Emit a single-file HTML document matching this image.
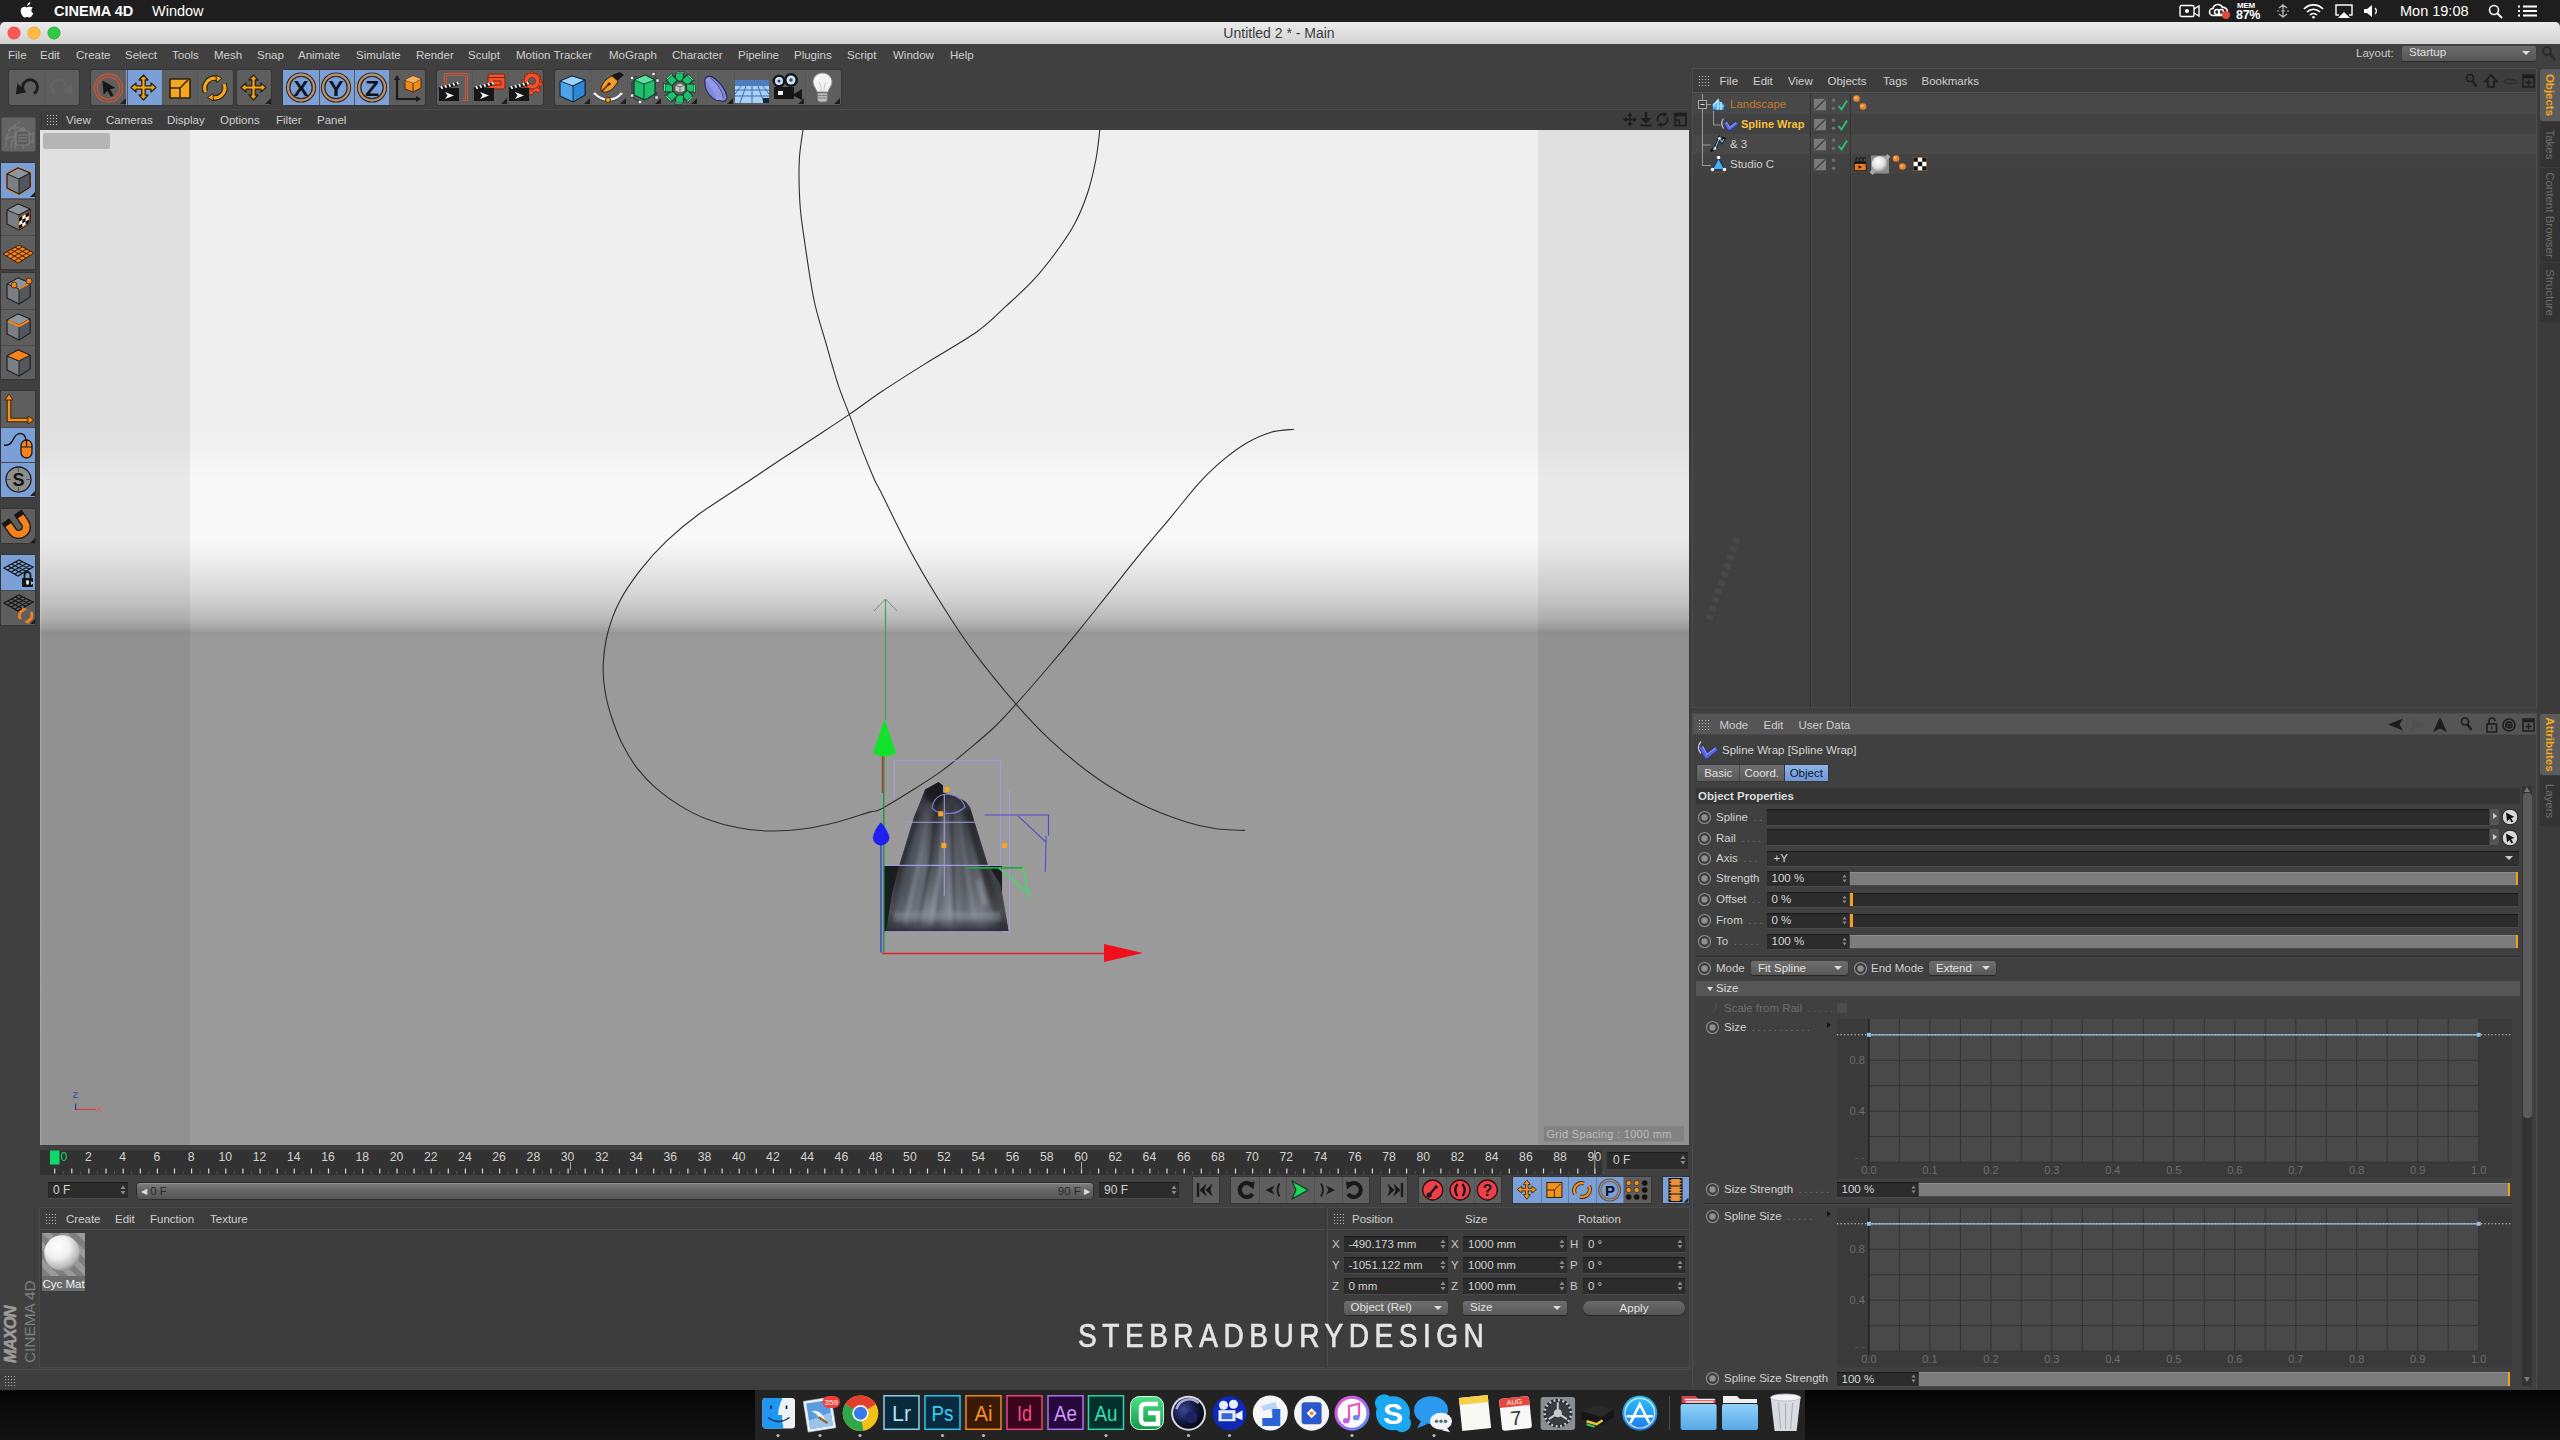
<!DOCTYPE html>
<html><head><meta charset="utf-8"><title>Cinema 4D</title>
<style>
*{box-sizing:border-box;margin:0;padding:0}
html,body{width:2560px;height:1440px;overflow:hidden;background:#404040;font-family:"Liberation Sans",sans-serif;}
.abs{position:absolute}
#macbar{position:absolute;left:0;top:0;width:2560px;height:22px;background:#1e1e1e;color:#fff;font-size:14.5px;}
#macbar span{position:absolute;top:2px;white-space:nowrap}
#titlebar{position:absolute;left:0;top:22px;width:2560px;height:22px;background:linear-gradient(#ececec,#d2d2d2);border-radius:5px 5px 0 0;}
#titlebar .t{position:absolute;left:0;width:2558px;text-align:center;top:3px;font-size:14px;color:#3c3c3c}
.tl{position:absolute;top:5px;width:12px;height:12px;border-radius:6px}
#menubar{position:absolute;left:0;top:44px;width:2560px;height:24px;background:#404040;color:#cfcfcf;font-size:11.5px}
#menubar span,.pm span{position:absolute;top:5px;white-space:nowrap}
.pm{position:absolute;color:#cfcfcf;font-size:11.5px;}
.grp{position:absolute;top:70px;height:35px;background:#5e5e5e;border-radius:2px;box-shadow:0 0 0 1px #353535}
.act{position:absolute;top:0;height:35px;background:#7ba0d8}
.grip{position:absolute;width:11px;height:11px;background-image:radial-gradient(#bbb 0.8px,transparent 1px);background-size:3px 3px;}
#root{position:absolute;left:0;top:0;width:2560px;height:1440px;}
</style></head><body><div id="root">
<div id="macbar">
<svg class="abs" style="left:20px;top:2px" width="15" height="17" viewBox="0 0 15 17"><path fill="#fff" d="M10.3 0.2c0.1 0.9 -0.3 1.8 -0.8 2.4c-0.6 0.7 -1.4 1.2 -2.3 1.1c-0.1 -0.9 0.3 -1.7 0.8 -2.3c0.6 -0.7 1.5 -1.1 2.3 -1.2zM12.9 5.8c-0.9 0.6 -1.5 1.4 -1.5 2.6c0 1.4 0.8 2.3 1.9 2.8c-0.3 0.9 -0.7 1.7 -1.2 2.4c-0.7 1 -1.4 1.9 -2.4 1.9c-1 0 -1.3 -0.6 -2.5 -0.6c-1.2 0 -1.5 0.6 -2.5 0.6c-1 0 -1.7 -0.9 -2.4 -1.9c-1.4 -2 -2.3 -4.8 -1 -7c0.7 -1.1 1.8 -1.8 3 -1.8c1 0 1.9 0.7 2.5 0.7c0.6 0 1.7 -0.8 2.9 -0.7c1 0 2.3 0.4 3.2 1z"/></svg>
<span style="left:54px;font-weight:bold;font-size:14.5px;top:3px">CINEMA 4D</span>
<span style="left:152px;top:3px">Window</span>
<!-- right status icons -->
<svg class="abs" style="left:2176px;top:0" width="370" height="22" viewBox="2176 0 370 22" fill="none" stroke="#fff" stroke-width="1.4">
<rect x="2180" y="5.5" width="14" height="11" rx="1.5"/><path d="M2194 9l5-3v10l-5-3"/><circle cx="2187" cy="11" r="2" fill="#fff" stroke="none"/>
<path d="M2213 15.5a3.5 3.5 0 0 1 0-7a5 5 0 0 1 9.5-1a4 4 0 0 1 1.5 8z" stroke-width="1.6"/><circle cx="2217" cy="12" r="2.5"/><circle cx="2221" cy="12" r="2.5"/>
<circle cx="2226" cy="15" r="4" fill="#e8483c" stroke="none"/>
<path d="M2283 4v14M2279 8l4-3l4 3M2279 14l4 3l4-3M2277 11h2M2281 11h4M2287 11h2" stroke-width="1.2" stroke="#bbb"/>
<path d="M2304 9a13 13 0 0 1 19 0M2307 12a9 9 0 0 1 13 0M2310 15a5 5 0 0 1 7 0" stroke-width="1.7"/><circle cx="2313.5" cy="17.3" r="1.3" fill="#fff" stroke="none"/>
<path d="M2339 15h-3v-10h16v10h-3"/><path d="M2344 12l6 6h-12z" fill="#fff" stroke="none"/>
<path d="M2364 9h3l5-4v12l-5-4h-3z" fill="#fff" stroke="none"/><path d="M2375 8a4 4 0 0 1 0 6" stroke-width="1.3"/>
<circle cx="2494" cy="10" r="4.5" stroke-width="1.6"/><path d="M2497.5 13.5l4.5 4.5" stroke-width="1.8"/>
<path d="M2523 6.5h14M2523 11h14M2523 15.5h14" stroke-width="2"/><path d="M2518 6.5h2M2518 11h2M2518 15.5h2" stroke-width="2"/>
</svg>
<span style="left:2237px;top:1px;font-size:8px;font-weight:bold;letter-spacing:-0.2px">MEM</span>
<span style="left:2236px;top:8px;font-size:12.5px;font-weight:bold;letter-spacing:-0.3px">87%</span>
<span style="left:2400px;top:3px;font-size:14.5px">Mon 19:08</span>
</div>

<div id="titlebar">
<div class="tl" style="left:8px;background:#fc5753;box-shadow:0 0 0 0.5px #df4744"></div>
<div class="tl" style="left:28px;background:#fdbc40;box-shadow:0 0 0 0.5px #de9f34"></div>
<div class="tl" style="left:48px;background:#33c748;box-shadow:0 0 0 0.5px #27aa35"></div>
<div class="t">Untitled 2 * - Main</div>
</div>

<div id="menubar"><span style="left:8px">File</span><span style="left:40px">Edit</span><span style="left:76px">Create</span><span style="left:125px">Select</span><span style="left:172px">Tools</span><span style="left:214px">Mesh</span><span style="left:257px">Snap</span><span style="left:298px">Animate</span><span style="left:356px">Simulate</span><span style="left:416px">Render</span><span style="left:468px">Sculpt</span><span style="left:516px">Motion Tracker</span><span style="left:609px">MoGraph</span><span style="left:672px">Character</span><span style="left:738px">Pipeline</span><span style="left:794px">Plugins</span><span style="left:847px">Script</span><span style="left:893px">Window</span><span style="left:950px">Help</span><span style="left:2356px;top:3px;font-size:11.5px;color:#c8c8c8">Layout:</span><div class="abs" style="left:2402px;top:2px;width:134px;height:15px;background:linear-gradient(#6b6b6b,#565656);border-radius:2px;box-shadow:0 1px 1px #2a2a2a"><span style="left:7px;top:0px;font-size:11.5px;color:#e0e0e0">Startup</span><div class="abs" style="right:6px;top:5px;border:4px solid transparent;border-top:4px solid #ddd;border-bottom:0"></div></div><svg class="abs" style="left:2541px;top:1px" width="16" height="18" viewBox="0 0 16 18"><circle cx="6" cy="6" r="4" fill="none" stroke="#2a2a2a" stroke-width="2"/><path d="M9 9l5 6" stroke="#2a2a2a" stroke-width="2.500"/></svg></div>
<div class="grp" style="left:9px;width:70px"><div class="abs" style="left:35px;top:0;width:1px;height:35px;background:#575757"></div><svg class="abs" style="left:-0.5px;top:0px" width="36" height="35" viewBox="0 0 36 35"><path d="M14.5 20.5A7.4 7.4 0 1 1 24.8 23.6" fill="none" stroke="#1c1c1c" stroke-width="2.8"/><path d="M6.8 24.6L8.5 13.2L17.5 22.3Z" fill="#1c1c1c"/></svg><svg class="abs" style="left:34.5px;top:0px" width="36" height="35" viewBox="0 0 36 35"><path d="M21.5 20.5A7.4 7.4 0 1 0 11.2 23.6" fill="none" stroke="#646464" stroke-width="2.8"/><path d="M29.2 24.6L27.5 13.2L18.5 22.3Z" fill="#646464"/></svg></div><div class="grp" style="left:91px;width:142px"><div class="act" style="left:35px;width:36px"></div><div class="abs" style="left:36px;top:0;width:1px;height:35px;background:#575757"></div><div class="abs" style="left:71px;top:0;width:1px;height:35px;background:#575757"></div><div class="abs" style="left:106px;top:0;width:1px;height:35px;background:#575757"></div><svg class="abs" style="left:-0.25px;top:0px" width="36" height="35" viewBox="0 0 36 35"><circle cx="17.5" cy="18" r="14" fill="none" stroke="#c8553a" stroke-width="1.3"/><circle cx="17.5" cy="18" r="11.2" fill="none" stroke="#c8553a" stroke-width="1.3"/><path d="M11.5 10.5l13 7.5l-5.5 1.2l3.5 6l-2.6 1.5l-3.5-6l-3.7 4z" fill="#161616"/><path d="M35 34h-6l6-6z" fill="#1e1e1e"/></svg><svg class="abs" style="left:35.25px;top:0px" width="36" height="35" viewBox="0 0 36 35"><path d="M17.5 5l4.5 5h-2.8v5.8h5.8v-2.8l5 4.5l-5 4.5v-2.8h-5.8v5.8h2.8l-4.5 5l-4.5-5h2.8v-5.8h-5.8v2.8l-5-4.5l5-4.5v2.8h5.8v-5.8h-2.8z" fill="#f6a51c" stroke="#2a2410" stroke-width="1.3" stroke-linejoin="round"/></svg><svg class="abs" style="left:70.75px;top:0px" width="36" height="35" viewBox="0 0 36 35"><path d="M8 9h20v19h-20z" fill="#f6a51c" stroke="#2a2410" stroke-width="1.6" stroke-linejoin="round"/><path d="M8 18h10v10M18 18l8-8" fill="none" stroke="#2a2410" stroke-width="1.5"/></svg><svg class="abs" style="left:106.25px;top:0px" width="36" height="35" viewBox="0 0 36 35"><path d="M8.5 22a10 10 0 0 1 12-13.5" fill="none" stroke="#2a2410" stroke-width="5.5"/><path d="M8.5 22a10 10 0 0 1 12-13.5" fill="none" stroke="#f6a51c" stroke-width="3.2"/><path d="M27 14a10 10 0 0 1-12 13.5" fill="none" stroke="#2a2410" stroke-width="5.5"/><path d="M27 14a10 10 0 0 1-12 13.5" fill="none" stroke="#f6a51c" stroke-width="3.2"/><path d="M19 5l6 3.5l-5.5 4z" fill="#f6a51c" stroke="#2a2410" stroke-width="1"/><path d="M16.5 31l-6-3.5l5.5-4z" fill="#f6a51c" stroke="#2a2410" stroke-width="1"/></svg></div><div class="grp" style="left:237px;width:34px"><svg class="abs" style="left:-1px;top:0px" width="36" height="35" viewBox="0 0 36 35"><path d="M17.5 5l4.5 5h-2.8v5.8h5.8v-2.8l5 4.5l-5 4.5v-2.8h-5.8v5.8h2.8l-4.5 5l-4.5-5h2.8v-5.8h-5.8v2.8l-5-4.5l5-4.5v2.8h5.8v-5.8h-2.8z" fill="#f6a51c" stroke="#2a2410" stroke-width="1.3" stroke-linejoin="round"/><path d="M35 34h-6l6-6z" fill="#1e1e1e"/></svg></div><div class="grp" style="left:283px;width:142px"><div class="act" style="left:0px;width:36px"></div><div class="act" style="left:36px;width:36px"></div><div class="act" style="left:71px;width:36px"></div><div class="abs" style="left:36px;top:0;width:1px;height:35px;background:#575757"></div><div class="abs" style="left:71px;top:0;width:1px;height:35px;background:#575757"></div><div class="abs" style="left:106px;top:0;width:1px;height:35px;background:#575757"></div><svg class="abs" style="left:-0.25px;top:0px" width="36" height="35" viewBox="0 0 36 35"><circle cx="18" cy="17.5" r="14.5" fill="none" stroke="#3a2a1a" stroke-width="1.2"/><circle cx="18" cy="17.5" r="13.2" fill="none" stroke="#d98a3a" stroke-width="1.3"/><circle cx="18" cy="17.5" r="11.2" fill="none" stroke="#3a2a1a" stroke-width="1.3"/><text x="18" y="25.6" font-family="Liberation Sans" font-weight="bold" font-size="22.5" text-anchor="middle" fill="#0d1420">X</text></svg><svg class="abs" style="left:35.25px;top:0px" width="36" height="35" viewBox="0 0 36 35"><circle cx="18" cy="17.5" r="14.5" fill="none" stroke="#3a2a1a" stroke-width="1.2"/><circle cx="18" cy="17.5" r="13.2" fill="none" stroke="#d98a3a" stroke-width="1.3"/><circle cx="18" cy="17.5" r="11.2" fill="none" stroke="#3a2a1a" stroke-width="1.3"/><text x="18" y="25.6" font-family="Liberation Sans" font-weight="bold" font-size="22.5" text-anchor="middle" fill="#0d1420">Y</text></svg><svg class="abs" style="left:70.75px;top:0px" width="36" height="35" viewBox="0 0 36 35"><circle cx="18" cy="17.5" r="14.5" fill="none" stroke="#3a2a1a" stroke-width="1.2"/><circle cx="18" cy="17.5" r="13.2" fill="none" stroke="#d98a3a" stroke-width="1.3"/><circle cx="18" cy="17.5" r="11.2" fill="none" stroke="#3a2a1a" stroke-width="1.3"/><text x="18" y="25.6" font-family="Liberation Sans" font-weight="bold" font-size="22.5" text-anchor="middle" fill="#0d1420">Z</text></svg><svg class="abs" style="left:106.25px;top:0px" width="36" height="35" viewBox="0 0 36 35"><path d="M8 8v21h21" fill="none" stroke="#1a1a1a" stroke-width="2.2"/><path d="M8 5l-3 5h6zM32 29l-5-3v6z" fill="#1a1a1a"/><path d="M16 10l8-4l8 3v9l-8 4l-8-3z" fill="#f08a1c" stroke="#4a2a08" stroke-width="1"/><path d="M16 10l8 3l8-4M24 13v9" fill="none" stroke="#4a2a08" stroke-width="1"/><path d="M16 10l8-4l8 3l-8 4z" fill="#f7b060"/></svg></div><div class="grp" style="left:437px;width:106px"><div class="abs" style="left:35px;top:0;width:1px;height:35px;background:#575757"></div><div class="abs" style="left:71px;top:0;width:1px;height:35px;background:#575757"></div><svg class="abs" style="left:-0.333333px;top:0px" width="36" height="35" viewBox="0 0 36 35"><path d="M7.5 3.5h23v27h-5M7.5 3.5v12" fill="none" stroke="#c8553a" stroke-width="1.2"/><path d="M9.5 5.5h19v23h-3M9.5 5.5v10" fill="none" stroke="#c8553a" stroke-width="1"/><g transform="translate(-3,-1)"><path d="M5 19h20v13h-20z" fill="#161616"/><path d="M4.5 18.5l20-5.5l0.8 3l-20 5.5z" fill="#161616"/><path d="M7 17.3l1.5 2.6M11 16.2l1.5 2.6M15 15.1l1.5 2.6M19 14l1.5 2.6M23 13l1.5 2.5" stroke="#eee" stroke-width="1.8"/><path d="M11 23l9 3.5l-9 3.5l2.5-3.5z" fill="#f2f2f2"/></g></svg><svg class="abs" style="left:35px;top:0px" width="36" height="35" viewBox="0 0 36 35"><path d="M18 4h13a2 2 0 0 1 2 2v11a2 2 0 0 1-2 2h-13a2 2 0 0 1-2-2v-11a2 2 0 0 1 2-2z" fill="#f0522c" stroke="#7a2410" stroke-width="1"/><path d="M16 7.5h17" stroke="#7a2410" stroke-width="1"/><path d="M21 11h8v4h-8z" fill="none" stroke="#7a2410" stroke-width="1"/><g transform="translate(-3,-1)"><path d="M5 19h20v13h-20z" fill="#161616"/><path d="M4.5 18.5l20-5.5l0.8 3l-20 5.5z" fill="#161616"/><path d="M7 17.3l1.5 2.6M11 16.2l1.5 2.6M15 15.1l1.5 2.6M19 14l1.5 2.6M23 13l1.5 2.5" stroke="#eee" stroke-width="1.8"/><path d="M11 23l9 3.5l-9 3.5l2.5-3.5z" fill="#f2f2f2"/></g><path d="M35 34h-6l6-6z" fill="#1e1e1e"/></svg><svg class="abs" style="left:70.3333px;top:0px" width="36" height="35" viewBox="0 0 36 35"><g transform="translate(25,11)"><path d="M-1.8-9h3.6l0.6 2.3l2 1l2.2-1l2.4 2.6l-1.3 2l0.7 2.1l2.2 0.9v3.4l-2.3 0.7l-0.9 2l1.1 2.2l-2.5 2.5l-2.1-1.2l-2.1 0.8l-0.7 2.3h-3.6" fill="#f0522c" stroke="#7a2410" stroke-width="0.8"/><circle r="8" fill="#f0522c"/><circle r="8" fill="none" stroke="#7a2410" stroke-width="0.6"/><path d="M0-10.5l2 2.5h-4zM0 10.5l2-2.5h-4zM10.5 0l-2.5 2v-4zM-10.5 0l2.5 2v-4zM7.4-7.4l-0.4 3.2l-2.8-2.8zM-7.4-7.4l0.4 3.2l2.8-2.8zM7.4 7.4l-0.4-3.2l-2.8 2.8zM-7.4 7.4l0.4-3.2l2.8 2.8z" fill="#f0522c" stroke="#7a2410" stroke-width="0.7"/><circle r="3.5" fill="#5e5e5e" stroke="#7a2410" stroke-width="0.8"/></g><g transform="translate(-3,-1)"><path d="M5 19h20v13h-20z" fill="#161616"/><path d="M4.5 18.5l20-5.5l0.8 3l-20 5.5z" fill="#161616"/><path d="M7 17.3l1.5 2.6M11 16.2l1.5 2.6M15 15.1l1.5 2.6M19 14l1.5 2.6M23 13l1.5 2.5" stroke="#eee" stroke-width="1.8"/><path d="M11 23l9 3.5l-9 3.5l2.5-3.5z" fill="#f2f2f2"/></g></svg></div><div class="grp" style="left:555px;width:286px"><div class="abs" style="left:36px;top:0;width:1px;height:35px;background:#575757"></div><div class="abs" style="left:72px;top:0;width:1px;height:35px;background:#575757"></div><div class="abs" style="left:107px;top:0;width:1px;height:35px;background:#575757"></div><div class="abs" style="left:143px;top:0;width:1px;height:35px;background:#575757"></div><div class="abs" style="left:179px;top:0;width:1px;height:35px;background:#575757"></div><div class="abs" style="left:214px;top:0;width:1px;height:35px;background:#575757"></div><div class="abs" style="left:250px;top:0;width:1px;height:35px;background:#575757"></div><svg class="abs" style="left:-0.125px;top:0px" width="36" height="35" viewBox="0 0 36 35"><path d="M5 11l12-5l13 4v15l-12 7l-13-6z" fill="#4da3e8" stroke="#12283c" stroke-width="1.2" stroke-linejoin="round"/><path d="M5 11l13 5l12-6l-13-4z" fill="#9ad2f8" stroke="#12283c" stroke-width="1" stroke-linejoin="round"/><path d="M18 16v16l12-7v-15z" fill="#2f86d2" stroke="#12283c" stroke-width="1" stroke-linejoin="round"/><path d="M35 34h-6l6-6z" fill="#1e1e1e"/></svg><svg class="abs" style="left:35.625px;top:0px" width="36" height="35" viewBox="0 0 36 35"><path d="M21 5l8-3l4 3l-7 6z" fill="#161616"/><path d="M10 21c-1-5 4-12 11-15l6 5c-3 7-9 12-15 11z" fill="#f39a2a" stroke="#3a1e08" stroke-width="1"/><path d="M11 21l8-8" stroke="#3a1e08" stroke-width="1.2"/><circle cx="18" cy="14" r="1.5" fill="#3a1e08"/><path d="M3 23c8 9 21 9 28 0" fill="none" stroke="#f4f4f4" stroke-width="2.6"/><path d="M3 23c8 9 21 9 28 0" fill="none" stroke="#222" stroke-width="0.6" transform="translate(0,1.7)"/><circle cx="17" cy="30" r="2.6" fill="#f39a2a" stroke="#3a1e08" stroke-width="0.9"/><path d="M35 34h-6l6-6z" fill="#1e1e1e"/></svg><svg class="abs" style="left:71.375px;top:0px" width="36" height="35" viewBox="0 0 36 35"><path d="M8 10l11-5l10 5v14l-10 6l-11-5z" fill="#1fbf6c" stroke="#0a3a20" stroke-width="1.2" stroke-linejoin="round"/><path d="M8 10l10 4l11-4l-10-5z" fill="#5de0a0" stroke="#0a3a20" stroke-width="0.9"/><path d="M18 14v16" stroke="#0a3a20" stroke-width="0.9"/><path d="M6 8l5-2M27 4l4 5M31 22l-3 7M14 32l-7-4M6 25v-14" stroke="#222" stroke-width="0.8" fill="none"/><g fill="#f4f4f4" stroke="#333" stroke-width="0.5"><rect x="4.5" y="6.5" width="3" height="3"/><rect x="26" y="2.5" width="3" height="3"/><rect x="30" y="9" width="3" height="3"/><rect x="29" y="26" width="3" height="3"/><rect x="12.5" y="30.5" width="3" height="3"/><rect x="4.5" y="24" width="3" height="3"/></g><path d="M35 34h-6l6-6z" fill="#1e1e1e"/></svg><svg class="abs" style="left:107.125px;top:0px" width="36" height="35" viewBox="0 0 36 35"><g transform="rotate(0 17.5 18)"><path d="M13.5 3.5h8v7.5h-8z" fill="#1fbf6c" stroke="#0a3a20" stroke-width="1"/><path d="M13.5 3.5l1.5-1.5h8l-1.5 1.5" fill="#5de0a0" stroke="#0a3a20" stroke-width="0.7"/></g><g transform="rotate(45 17.5 18)"><path d="M13.5 3.5h8v7.5h-8z" fill="#1fbf6c" stroke="#0a3a20" stroke-width="1"/><path d="M13.5 3.5l1.5-1.5h8l-1.5 1.5" fill="#5de0a0" stroke="#0a3a20" stroke-width="0.7"/></g><g transform="rotate(90 17.5 18)"><path d="M13.5 3.5h8v7.5h-8z" fill="#1fbf6c" stroke="#0a3a20" stroke-width="1"/><path d="M13.5 3.5l1.5-1.5h8l-1.5 1.5" fill="#5de0a0" stroke="#0a3a20" stroke-width="0.7"/></g><g transform="rotate(135 17.5 18)"><path d="M13.5 3.5h8v7.5h-8z" fill="#1fbf6c" stroke="#0a3a20" stroke-width="1"/><path d="M13.5 3.5l1.5-1.5h8l-1.5 1.5" fill="#5de0a0" stroke="#0a3a20" stroke-width="0.7"/></g><g transform="rotate(180 17.5 18)"><path d="M13.5 3.5h8v7.5h-8z" fill="#1fbf6c" stroke="#0a3a20" stroke-width="1"/><path d="M13.5 3.5l1.5-1.5h8l-1.5 1.5" fill="#5de0a0" stroke="#0a3a20" stroke-width="0.7"/></g><g transform="rotate(225 17.5 18)"><path d="M13.5 3.5h8v7.5h-8z" fill="#1fbf6c" stroke="#0a3a20" stroke-width="1"/><path d="M13.5 3.5l1.5-1.5h8l-1.5 1.5" fill="#5de0a0" stroke="#0a3a20" stroke-width="0.7"/></g><g transform="rotate(270 17.5 18)"><path d="M13.5 3.5h8v7.5h-8z" fill="#1fbf6c" stroke="#0a3a20" stroke-width="1"/><path d="M13.5 3.5l1.5-1.5h8l-1.5 1.5" fill="#5de0a0" stroke="#0a3a20" stroke-width="0.7"/></g><g transform="rotate(315 17.5 18)"><path d="M13.5 3.5h8v7.5h-8z" fill="#1fbf6c" stroke="#0a3a20" stroke-width="1"/><path d="M13.5 3.5l1.5-1.5h8l-1.5 1.5" fill="#5de0a0" stroke="#0a3a20" stroke-width="0.7"/></g><path d="M13 15l5-2l5 2v6l-5 2l-5-2z" fill="#c8c8c8" stroke="#444" stroke-width="0.8"/><path d="M13 15l5 2l5-2M18 17v6" fill="none" stroke="#444" stroke-width="0.7"/><path d="M35 34h-6l6-6z" fill="#1e1e1e"/></svg><svg class="abs" style="left:142.875px;top:0px" width="36" height="35" viewBox="0 0 36 35"><path d="M7 10c0-4 5-5 9-2c6 4 12 12 13 19c0 3-2 5-6 4l-5-1c-5-2-10-8-11-14z" fill="#7f86dc" stroke="#23264e" stroke-width="1.1"/><path d="M12 8c6 4 12 12 13 20" fill="none" stroke="#23264e" stroke-width="0.9"/><path d="M7 10c2-2 4-2 5-2c6 4 12 12 13 20c-1 2-3 2-7 2c-1-7-6-15-11-20z" fill="#9aa0ea" opacity="0.7"/><path d="M35 34h-6l6-6z" fill="#1e1e1e"/></svg><svg class="abs" style="left:178.625px;top:0px" width="36" height="35" viewBox="0 0 36 35"><path d="M1 10h34v6h-34z" fill="#4d7dbe"/><path d="M1 16h34v17h-34z" fill="#a9d0f5"/><path d="M1 20h34M1 26h34M18 16v17M12 16l-6 17M24 16l6 17M7 16l-6 8M29 16l6 8" stroke="#3d6cae" stroke-width="1" fill="none"/><path d="M35 33h-6v-5h6z" fill="#12283c"/></svg><svg class="abs" style="left:214.375px;top:0px" width="36" height="35" viewBox="0 0 36 35"><circle cx="10" cy="11" r="6.5" fill="#161616"/><circle cx="22" cy="10" r="7" fill="#161616"/><circle cx="10" cy="11" r="4" fill="#cfe4f8"/><circle cx="22" cy="10" r="4.5" fill="#cfe4f8"/><circle cx="10" cy="11" r="1.6" fill="#2a4a7a"/><circle cx="22" cy="10" r="1.8" fill="#2a4a7a"/><path d="M5 17h20v12h-20z" fill="#161616"/><path d="M25 24l8-5v11l-8-4z" fill="#161616"/><rect x="9" y="21" width="5" height="4" fill="#f0f0f0"/><path d="M35 34h-6l6-6z" fill="#1e1e1e"/></svg><svg class="abs" style="left:250.125px;top:0px" width="36" height="35" viewBox="0 0 36 35"><path d="M17.5 3c6 0 9.5 4.5 9.5 9c0 4-3 6-4 10h-11c-1-4-4-6-4-10c0-4.5 3.5-9 9.5-9z" fill="#f2f2f2" stroke="#8a8a8a" stroke-width="1"/><path d="M14 7c-2 1-3 3-3 5" stroke="#fff" stroke-width="2" fill="none"/><path d="M12.5 23h10v7l-2 2h-6l-2-2z" fill="#bdbdbd" stroke="#777" stroke-width="0.8"/><path d="M12.5 25.5h10M12.5 28h10" stroke="#777" stroke-width="0.9"/><path d="M14 12c2 3 2 7 2 10M21 12c-2 3-2 7-2 10" stroke="#bbb" stroke-width="0.8" fill="none"/><path d="M35 34h-6l6-6z" fill="#1e1e1e"/></svg></div>
<div class="abs" style="left:1px;top:163px;width:34px;height:106px;background:#5e5e5e;box-shadow:0 0 0 1px #353535"></div><div class="abs" style="left:1px;top:273px;width:34px;height:106px;background:#5e5e5e;box-shadow:0 0 0 1px #353535"></div><div class="abs" style="left:1px;top:391px;width:34px;height:106px;background:#5e5e5e;box-shadow:0 0 0 1px #353535"></div><div class="abs" style="left:1px;top:509px;width:34px;height:34px;background:#5e5e5e;box-shadow:0 0 0 1px #353535"></div><div class="abs" style="left:1px;top:555px;width:34px;height:70px;background:#5e5e5e;box-shadow:0 0 0 1px #353535"></div><svg class="abs" style="left:1px;top:117px" width="35" height="35" viewBox="0 0 35 35"><rect x="0.5" y="0.5" width="34" height="34" rx="2" fill="#646464"/><path d="M5 30c0-13 5-22 14-25M10 31c1-11 6-18 14-20M4 22c6-3 14-3 20 0M7 13c5-3 12-3 18 0M14 8v24M22 10v22" stroke="#787878" stroke-width="1.3" fill="none"/><rect x="15" y="14" width="13" height="14" rx="2" fill="#5c5c5c" stroke="#7e7e7e" stroke-width="1.2"/><path d="M28 18l4-2v10l-4-2M17 18h9M17 21h9M17 24h9" stroke="#7e7e7e" stroke-width="1" fill="none"/></svg><div class="abs" style="left:1px;top:163px;width:34px;height:35px;background:#7ba0d8"></div><svg class="abs" style="left:1px;top:163px" width="35" height="35" viewBox="0 0 35 35"><path d="M6 11l11-6l12 5v14l-11 7l-12-6z" fill="#7a7a7a" stroke="#e8791c" stroke-width="2.6" stroke-linejoin="round"/><path d="M6 11l11-6l12 5v14l-11 7l-12-6z" fill="#7a7f86" stroke="#222" stroke-width="1.2" stroke-linejoin="round"/><path d="M6 11l12 5l11-6l-12-5z" fill="#8f959c" stroke="#222" stroke-width="1"/><path d="M18 16v15l11-7v-14z" fill="#52575e" stroke="#222" stroke-width="1"/><path d="M34 34h-5l5-5z" fill="#1e1e1e"/></svg><div class="abs" style="left:1px;top:199px;width:34px;height:1px;background:#4c4c4c"></div><svg class="abs" style="left:1px;top:199px" width="35" height="35" viewBox="0 0 35 35"><path d="M6 11l11-6l12 5v14l-11 7l-12-6z" fill="#7a7f86" stroke="#222" stroke-width="1.2" stroke-linejoin="round"/><path d="M6 11l12 5l11-6l-12-5z" fill="#8f959c" stroke="#222" stroke-width="1"/><path d="M18 16v15l11-7v-14z" fill="#52575e" stroke="#222" stroke-width="1"/><g transform="matrix(1 -0.6 0 1 18 19)"><rect width="10" height="11" fill="#fff" stroke="#e8791c" stroke-width="1"/><path d="M0 0h3.3v3.7h-3.3zM6.6 0h3.4v3.7h-3.4zM3.3 3.7h3.3v3.7h-3.3zM0 7.4h3.3v3.6h-3.3zM6.6 7.4h3.4v3.6h-3.4z" fill="#111"/></g></svg><div class="abs" style="left:1px;top:235px;width:34px;height:1px;background:#4c4c4c"></div><svg class="abs" style="left:1px;top:235px" width="35" height="35" viewBox="0 0 35 35"><path d="M2 19l16-9l15 8l-16 10z" fill="#f6821c" stroke="#3a1e08" stroke-width="1"/><path d="M6 16.7l15.5 9M10 14.5l15.5 8.6M14 12.2l15.3 8.5M5.5 21l16-9.3M9.5 23.5l16-9.5M13.5 25.7l16-9.7" stroke="#3a1e08" stroke-width="1" fill="none"/></svg><svg class="abs" style="left:1px;top:273px" width="35" height="35" viewBox="0 0 35 35"><path d="M6 11l11-6l12 5v14l-11 7l-12-6z" fill="#7a7f86" stroke="#222" stroke-width="1.2" stroke-linejoin="round"/><path d="M6 11l12 5l11-6l-12-5z" fill="#8f959c" stroke="#222" stroke-width="1"/><path d="M18 16v15l11-7v-14z" fill="#52575e" stroke="#222" stroke-width="1"/><path d="M18 16l11-6" stroke="#f6821c" stroke-width="1.5"/><circle cx="13" cy="12" r="3" fill="#f6821c" stroke="#3a1e08" stroke-width="0.8"/><circle cx="28" cy="8" r="3" fill="#f6821c" stroke="#3a1e08" stroke-width="0.8"/></svg><div class="abs" style="left:1px;top:309px;width:34px;height:1px;background:#4c4c4c"></div><svg class="abs" style="left:1px;top:309px" width="35" height="35" viewBox="0 0 35 35"><path d="M6 11l11-6l12 5v14l-11 7l-12-6z" fill="#7a7f86" stroke="#222" stroke-width="1.2" stroke-linejoin="round"/><path d="M6 11l12 5l11-6l-12-5z" fill="#8f959c" stroke="#222" stroke-width="1"/><path d="M18 16v15l11-7v-14z" fill="#52575e" stroke="#222" stroke-width="1"/><path d="M7 12l11 5l10-5.5" stroke="#f6821c" stroke-width="2.2" fill="none"/></svg><div class="abs" style="left:1px;top:345px;width:34px;height:1px;background:#4c4c4c"></div><svg class="abs" style="left:1px;top:345px" width="35" height="35" viewBox="0 0 35 35"><path d="M6 11l11-6l12 5v14l-11 7l-12-6z" fill="#7a7f86" stroke="#222" stroke-width="1.2" stroke-linejoin="round"/><path d="M6 11l12 5l11-6l-12-5z" fill="#8f959c" stroke="#222" stroke-width="1"/><path d="M18 16v15l11-7v-14z" fill="#52575e" stroke="#222" stroke-width="1"/><path d="M6 11l12 5l11-6l-12-5z" fill="#f6821c" stroke="#222" stroke-width="1"/></svg><svg class="abs" style="left:1px;top:391px" width="35" height="35" viewBox="0 0 35 35"><path d="M8 8v21h21" fill="none" stroke="#3a1e08" stroke-width="4.5"/><path d="M8 8v21h21" fill="none" stroke="#f6921c" stroke-width="2.5"/><path d="M8 3l-4 6h8zM33 29l-6-4v8z" fill="#f6921c" stroke="#3a1e08" stroke-width="0.9"/></svg><div class="abs" style="left:1px;top:427px;width:34px;height:35px;background:#7ba0d8"></div><div class="abs" style="left:1px;top:427px;width:34px;height:1px;background:#4c4c4c"></div><svg class="abs" style="left:1px;top:427px" width="35" height="35" viewBox="0 0 35 35"><path d="M3 18c6 1 8-3 10-7s6-6 10-3c2 2 2 4 2 6" fill="none" stroke="#161616" stroke-width="1.5"/><rect x="20" y="13" width="11" height="18" rx="5.5" fill="#f6821c" stroke="#161616" stroke-width="1.3"/><path d="M20 20h11M25.5 13v7" stroke="#161616" stroke-width="1.1"/></svg><div class="abs" style="left:1px;top:462px;width:34px;height:35px;background:#7ba0d8"></div><div class="abs" style="left:1px;top:462px;width:34px;height:1px;background:#4c4c4c"></div><svg class="abs" style="left:1px;top:462px" width="35" height="35" viewBox="0 0 35 35"><circle cx="17.5" cy="17.5" r="12.5" fill="#8e8e8e" stroke="#1c1c1c" stroke-width="1.3"/><path d="M17.5 5v5M17.5 25v5M5 17.5h5M25 17.5h5" stroke="#555" stroke-width="1"/><text x="17.5" y="24" font-family="Liberation Sans" font-weight="bold" font-size="18" text-anchor="middle" fill="#111">S</text><path d="M34 34h-5l5-5z" fill="#1e1e1e"/></svg><svg class="abs" style="left:1px;top:509px" width="35" height="35" viewBox="0 0 35 35"><g transform="rotate(-35 17.5 17.5)"><path d="M6 6h8v12a3.5 3.5 0 0 0 7 0v-12h8v12a11.5 11.5 0 0 1-23 0z" fill="#f6821c" stroke="#161616" stroke-width="1.3"/><path d="M6 6h8v4.5h-8zM21 6h8v4.5h-8z" fill="#161616"/></g><path d="M34 34h-5l5-5z" fill="#1e1e1e"/></svg><div class="abs" style="left:1px;top:555px;width:34px;height:35px;background:#7ba0d8"></div><svg class="abs" style="left:1px;top:555px" width="35" height="35" viewBox="0 0 35 35"><path d="M3 13l15-8l14 7l-15 9z" fill="none" stroke="#161616" stroke-width="1.3"/><path d="M6.8 11l14.5 7.5M10.5 9l14.3 7.3M14.3 7l14.2 7M6.5 15l15-8.2M10.3 17l15-8.4M13.8 19l15-8.5" stroke="#161616" stroke-width="1.2" fill="none"/><rect x="21" y="23" width="11" height="9" rx="1" fill="#161616"/><path d="M23.5 23v-3a3 3 0 0 1 6 0v3" fill="none" stroke="#161616" stroke-width="1.8"/><path d="M25 25.5h3l-0.5 4h-2z" fill="#fff"/><path d="M30 26l3 2l-3 2" fill="#9ac0ea"/></svg><div class="abs" style="left:1px;top:590px;width:34px;height:1px;background:#4c4c4c"></div><svg class="abs" style="left:1px;top:590px" width="35" height="35" viewBox="0 0 35 35"><path d="M3 13l15-8l14 7l-15 9z" fill="none" stroke="#161616" stroke-width="1.3"/><path d="M6.8 11l14.5 7.5M10.5 9l14.3 7.3M14.3 7l14.2 7M6.5 15l15-8.2M10.3 17l15-8.4M13.8 19l15-8.5" stroke="#161616" stroke-width="1.2" fill="none"/><path d="M19.5 29a6 6 0 0 1 3-9" fill="none" stroke="#f6821c" stroke-width="2.8"/><path d="M30 22a6 6 0 0 1-3 9" fill="none" stroke="#f6821c" stroke-width="2.8"/><path d="M21 17l5 2l-4 3zM28.5 34l-5-2l4-3z" fill="#f6821c"/><path d="M34 34h-5l5-5z" fill="#1e1e1e"/></svg>
<div class="abs" style="left:40px;top:108px;width:1651px;height:1038px;background:#3c3c3c"></div><div class="abs" style="left:40px;top:109px;width:1650px;height:21px;background:#3d3d3d;border-top:1px solid #4c4c4c"></div><div class="grip" style="left:46px;top:114px"></div><div class="pm" style="left:0;top:109px;height:21px;width:400px"><span style="left:66px">View</span><span style="left:106px">Cameras</span><span style="left:167px">Display</span><span style="left:220px">Options</span><span style="left:276px">Filter</span><span style="left:317px">Panel</span></div><svg class="abs" style="left:1620px;top:111px" width="70" height="18" viewBox="1620 111 70 18" fill="none" stroke="#1d1d1d" stroke-width="1.6"><path d="M1630 112.5l2.6 3.6h-5.2zM1630 126.5l2.6-3.6h-5.2zM1623 119.5l3.6-2.6v5.2zM1637 119.5l-3.6-2.6v5.2z" fill="#1d1d1d" stroke="none"/><path d="M1630 115v9M1625.5 119.5h9" stroke-width="1.3"/><path d="M1646 112v7" stroke-width="2.4"/><path d="M1640.5 118h11l-5.5 5.5z" fill="#1d1d1d" stroke="none"/><path d="M1640.5 125.5h11" stroke-width="1.8"/><path d="M1658 121.5a5 5 0 0 1 7-6.5M1667 117.5a5 5 0 0 1-7 6.5" stroke-width="1.7"/><path d="M1663.5 112l4 2.5l-4 2.5zM1661.5 127l-4-2.5l4-2.5z" fill="#1d1d1d" stroke="none"/><rect x="1675" y="113.5" width="11" height="12"/><path d="M1675 115h11" stroke-width="2.4"/><path d="M1675 120h4.5v5.5" stroke-width="1.3"/></svg><svg class="abs" style="left:40px;top:130px" width="1649" height="1015" viewBox="40 130 1649 1015"><defs><linearGradient id="vg" x1="0" y1="130" x2="0" y2="1145" gradientUnits="userSpaceOnUse"><stop offset="0" stop-color="#efefef"/><stop offset="0.2956" stop-color="#efefef"/><stop offset="0.3153" stop-color="#f2f2f2"/><stop offset="0.3429" stop-color="#f8f8f8"/><stop offset="0.4039" stop-color="#f8f8f8"/><stop offset="0.4118" stop-color="#f5f5f5"/><stop offset="0.4236" stop-color="#ededed"/><stop offset="0.4433" stop-color="#e0e0e0"/><stop offset="0.4611" stop-color="#d2d2d2"/><stop offset="0.4808" stop-color="#bababa"/><stop offset="0.4897" stop-color="#a8a8a8"/><stop offset="0.4956" stop-color="#979797"/><stop offset="0.5025" stop-color="#9a9a9a"/><stop offset="1" stop-color="#9b9b9b"/></linearGradient></defs><rect x="40" y="130" width="1649" height="1015" fill="url(#vg)"/><rect x="40" y="130" width="150" height="1015" fill="#000" opacity="0.06"/><rect x="1538" y="130" width="151" height="1015" fill="#000" opacity="0.06"/><rect x="40" y="130" width="1.5" height="1015" fill="#fff" opacity="0.18"/><rect x="43" y="133" width="67" height="16" rx="2" fill="#b5b5b5"/><path d="M803.3 128C802.6 133.3 799.9 147.5 799.3 160C798.7 172.5 799.1 189.8 799.9 203C800.7 216.2 801.9 223.2 804.3 239.4C806.6 255.6 810.4 282.6 814 300C817.6 317.4 822.2 329.7 826.2 343.9C830.2 358.1 834.4 373.4 838.3 385.2C842.1 396.9 845.2 403.4 849.3 414.4C853.3 425.3 858.4 440 862.6 450.9C866.8 461.8 871.7 473.4 874.6 480C877.5 486.6 874 478.4 880 490.3C886 502.2 900.4 532.6 910.6 551.4C920.8 570.2 930.9 587 941.1 603.3C951.3 619.6 959.2 632.4 971.7 649.2C984.2 666 1002.8 688.9 1016 704.2C1029.2 719.5 1038.1 728.8 1051.1 740.8C1064.1 752.8 1079.1 765.5 1093.9 776C1108.7 786.5 1124.4 795.9 1139.7 803.5C1155 811.1 1172.8 817.6 1185.5 821.8C1198.2 826 1206.2 827.4 1216.1 828.8C1226 830.2 1240.3 830.1 1245.1 830.4" fill="none" stroke="#2e2e2e" stroke-width="1.1"/><path d="M1100 128C1099.3 133.2 1098.1 148.1 1096 159C1093.9 169.9 1091.2 182.2 1087.5 193.2C1083.8 204.2 1079.6 214.7 1074.1 224.8C1068.6 234.9 1061.6 244.7 1054.7 254C1047.8 263.3 1040.9 272 1032.8 280.7C1024.7 289.4 1015.3 297.7 1006 306.2C996.7 314.7 990.3 322.3 976.9 331.8C963.5 341.3 941.6 353.5 925.8 363.4C910 373.3 894.9 382.8 882.1 391.3C869.4 399.8 860.2 406.9 849.3 414.4C838.4 421.9 828 428.7 816.5 436.3C805 443.9 791 452.7 780 460C769 467.3 763.8 470.9 750.2 480C736.7 489.1 712.6 504.2 698.7 514.3C684.8 524.4 676.7 531.5 667 540.7C657.3 549.9 648.6 559.6 640.7 569.7C632.8 579.8 625.1 590.9 619.6 601.4C614.1 611.9 610.4 622.5 607.7 633C605 643.5 603.7 655 603.2 664.7C602.8 674.4 603.6 682.2 605 691C606.4 699.8 608.8 708.7 611.7 717.5C614.6 726.3 618 735.4 622.2 743.8C626.4 752.1 631 760.1 636.7 767.6C642.4 775.1 649.2 782.3 656.5 788.7C663.8 795.1 671.9 800.9 680.3 805.9C688.6 810.9 696.9 815.4 706.6 819C716.3 822.6 727.7 825.8 738.3 827.8C748.9 829.8 759 830.8 770 831C781 831.2 792.9 830.3 804.3 828.8C815.7 827.2 827.6 824.5 838.6 821.7C849.6 818.9 863.3 813.9 870.2 811.9C877.1 809.9 873.3 813 880 809.6C886.7 806.2 900.4 797.7 910.6 791.3C920.8 784.9 930.9 778.8 941.1 771.4C951.3 764 962.5 754.5 971.7 746.9C980.9 739.2 988.7 732.6 996.1 725.5C1003.5 718.4 1007.4 713.9 1016 704.2C1024.7 694.5 1037.6 679.7 1048 667.5C1058.4 655.3 1068.4 643.3 1078.6 630.8C1088.8 618.3 1099 605.3 1109.2 592.6C1119.4 579.9 1129.5 566.9 1139.7 554.4C1149.9 541.9 1160.1 530 1170.3 517.8C1180.5 505.6 1191.6 491 1200.8 481.1C1210 471.2 1217.6 464.6 1225.3 458.2C1233 451.8 1239.1 447.2 1246.7 442.9C1254.3 438.6 1263.2 434.5 1271.1 432.2C1279 429.9 1290.2 429.7 1294 429.2" fill="none" stroke="#2e2e2e" stroke-width="1.1"/><g>
<defs>
<linearGradient id="mt" x1="0" y1="0" x2="1" y2="0"><stop offset="0" stop-color="#2b2e33"/><stop offset="0.18" stop-color="#4a4e56"/><stop offset="0.32" stop-color="#6f747d"/><stop offset="0.42" stop-color="#4d5159"/><stop offset="0.52" stop-color="#7d828b"/><stop offset="0.64" stop-color="#50545c"/><stop offset="0.78" stop-color="#656a73"/><stop offset="0.9" stop-color="#34373d"/><stop offset="1" stop-color="#1d1f23"/></linearGradient>
<linearGradient id="mt2" x1="0" y1="0" x2="0" y2="1"><stop offset="0" stop-color="#14161a" stop-opacity="0.95"/><stop offset="0.22" stop-color="#24272c" stop-opacity="0.55"/><stop offset="0.55" stop-color="#3a3d44" stop-opacity="0.15"/><stop offset="0.86" stop-color="#a0a5ae" stop-opacity="0.3"/><stop offset="0.95" stop-color="#4a4d55" stop-opacity="0.5"/><stop offset="1" stop-color="#2a2c32" stop-opacity="0.9"/></linearGradient>
<filter id="bl" x="-10%" y="-10%" width="120%" height="120%"><feGaussianBlur stdDeviation="1.6"/></filter>
<clipPath id="mclip"><path d="M886 931L892 893L900 863L914 817L925 789.5L938.5 782L943 785.5L943 792.5L956 796L965.5 801.5L970 807L978 833L988 865L1000.5 884L1008.5 931Z"/></clipPath>
</defs>
<rect x="884" y="866" width="118" height="65.5" fill="#1b1c20"/>
<path d="M886 931L892 893L900 863L914 817L925 789.5L938.5 782L943 785.5L943 792.5L956 796L965.5 801.5L970 807L978 833L988 865L1000.5 884L1008.5 931Z" fill="url(#mt)"/>
<g clip-path="url(#mclip)">
<g filter="url(#bl)">
<path d="M930 800L922 850L905 925" stroke="#8f949d" stroke-width="5" opacity="0.55" fill="none"/>
<path d="M945 815L940 870L930 925" stroke="#a4a9b2" stroke-width="6" opacity="0.5" fill="none"/>
<path d="M958 812L965 860L975 920" stroke="#8b909a" stroke-width="5" opacity="0.5" fill="none"/>
<path d="M937 800L931 860L918 925" stroke="#25272c" stroke-width="4" opacity="0.6" fill="none"/>
<path d="M951 805L953 865L955 925" stroke="#2a2c32" stroke-width="4" opacity="0.55" fill="none"/>
<path d="M968 810L985 870L1003 930" stroke="#17181c" stroke-width="9" opacity="0.75" fill="none"/>
<path d="M918 812L900 870L889 928" stroke="#202226" stroke-width="6" opacity="0.6" fill="none"/>
<path d="M978 880L985 905" stroke="#9ea3ac" stroke-width="5" opacity="0.5" fill="none"/>
<path d="M925 789L938.5 782L943 786L944 800L936 806L926 800Z" fill="#16181b" opacity="0.9"/>
<path d="M895 917H1000" stroke="#a3a8b2" stroke-width="9" opacity="0.45"/>
</g>
<path d="M886 931L892 893L900 863L914 817L925 789.5L938.5 782L943 785.5L943 792.5L956 796L965.5 801.5L970 807L978 833L988 865L1000.5 884L1008.5 931Z" fill="url(#mt2)"/>
</g>
<g fill="none" stroke="#a59be0" stroke-width="1.1">
<path d="M894 760.8H1000.6M1000.6 760.8V866M894.3 760.8V800M1009.4 790V931.7M884 865.4H999M885 931.7H1009.4M908 822.3H975M944.3 794.3V895.8"/>
<path d="M932 808Q934 795 947 794Q962 796 965 807Q958 814 947 813.5Q936 813 932 808Z" stroke="#8a7fe0"/>
</g>
<path d="M984.6 815H1048.5V835.8M1018 815.9L1046 842.2V835.8M1046 842L1045.3 871.8" fill="none" stroke="#5348d0" stroke-width="1.1"/>
<path d="M967 867.8H1023" fill="none" stroke="#1faa3a" stroke-width="1.8"/>
<path d="M999 868L1028 893M1023 867.8L1029.3 898" fill="none" stroke="#4fd268" stroke-width="2.2" opacity="0.85"/>
<g fill="#f5a623"><rect x="944.5" y="787" width="5" height="5"/><rect x="938.2" y="811.3" width="5" height="5"/><rect x="941.4" y="843" width="5" height="5"/><rect x="1002" y="843" width="5" height="5"/></g>
<path d="M885.5 599V720" stroke="#3da55a" stroke-width="1.2"/><path d="M874 611L885.5 599L897 611" fill="none" stroke="#5a9a6a" stroke-width="1"/>
<path d="M883.8 756V952.5" stroke="#1f9a4a" stroke-width="1.5"/>
<path d="M882.4 740V793" stroke="#e02020" stroke-width="1.2"/>
<path d="M884.5 719L896 753Q885 760 873 753Z" fill="#12e32a"/>
<path d="M881 845V952.5" stroke="#2a2ae0" stroke-width="1.2"/>
<path d="M880.8 822.3Q888 830 889.5 838Q888 845 880.8 845.5Q874 845 872.8 838Q874 830 880.8 822.3Z" fill="#1f1ff0"/>
<path d="M882 953.5H1106" stroke="#e8202a" stroke-width="1.3"/>
<path d="M1104 944L1143 953L1104 962Z" fill="#f0101c"/>
</g><g font-family="Liberation Sans" font-size="9" font-weight="bold"><path d="M75.6 1109.5H96" fill="none" stroke="#d8404a" stroke-width="1.2"/><path d="M75.6 1103.5V1110" stroke="#2a3a8a" stroke-width="1.2"/><text x="72.5" y="1086" fill="#5fb87a" opacity="0.45">Y</text><text x="72.5" y="1098" fill="#3a5ab0">Z</text><text x="97" y="1112" fill="#d86a6a">X</text></g><rect x="1544" y="1126" width="140" height="15.5" fill="#000" opacity="0.1"/><text x="1546.5" y="1137.5" font-family="Liberation Sans" font-size="11" fill="#bdbdbd" letter-spacing="0.3">Grid Spacing : 1000 mm</text></svg>
<div class="abs" style="left:40px;top:1150px;width:1562px;height:25px;background:#323232"></div><svg class="abs" style="left:40px;top:1148px" width="1650" height="30" viewBox="40 1148 1650 30" font-family="Liberation Sans" font-size="12.2" fill="#d2d2d2"><path d="M54.7 1168.5v5M71.8 1168.5v5M88.9 1168.5v5M106 1168.5v5M123.2 1168.5v5M140.3 1168.5v5M157.4 1168.5v5M174.5 1168.5v5M191.6 1168.5v5M208.7 1168.5v5M225.8 1168.5v5M242.9 1168.5v5M260.1 1168.5v5M277.2 1168.5v5M294.3 1168.5v5M311.4 1168.5v5M328.5 1168.5v5M345.6 1168.5v5M362.7 1168.5v5M379.8 1168.5v5M397 1168.5v5M414.1 1168.5v5M431.2 1168.5v5M448.3 1168.5v5M465.4 1168.5v5M482.5 1168.5v5M499.6 1168.5v5M516.8 1168.5v5M533.9 1168.5v5M551 1168.5v5M568.1 1168.5v5M585.2 1168.5v5M602.3 1168.5v5M619.4 1168.5v5M636.5 1168.5v5M653.7 1168.5v5M670.8 1168.5v5M687.9 1168.5v5M705 1168.5v5M722.1 1168.5v5M739.2 1168.5v5M756.3 1168.5v5M773.4 1168.5v5M790.6 1168.5v5M807.7 1168.5v5M824.8 1168.5v5M841.9 1168.5v5M859 1168.5v5M876.1 1168.5v5M893.2 1168.5v5M910.4 1168.5v5M927.5 1168.5v5M944.6 1168.5v5M961.7 1168.5v5M978.8 1168.5v5M995.9 1168.5v5M1013 1168.5v5M1030.1 1168.5v5M1047.3 1168.5v5M1064.4 1168.5v5M1081.5 1168.5v5M1098.6 1168.5v5M1115.7 1168.5v5M1132.8 1168.5v5M1149.9 1168.5v5M1167 1168.5v5M1184.2 1168.5v5M1201.3 1168.5v5M1218.4 1168.5v5M1235.5 1168.5v5M1252.6 1168.5v5M1269.7 1168.5v5M1286.8 1168.5v5M1303.9 1168.5v5M1321.1 1168.5v5M1338.2 1168.5v5M1355.3 1168.5v5M1372.4 1168.5v5M1389.5 1168.5v5M1406.6 1168.5v5M1423.7 1168.5v5M1440.9 1168.5v5M1458 1168.5v5M1475.1 1168.5v5M1492.2 1168.5v5M1509.3 1168.5v5M1526.4 1168.5v5M1543.5 1168.5v5M1560.6 1168.5v5M1577.8 1168.5v5M1594.9 1168.5v5" stroke="#d8d8d8" stroke-width="1.2"/><path d="M63.2 1171v3M80.3 1171v3M97.4 1171v3M114.5 1171v3M131.7 1171v3M148.8 1171v3M165.9 1171v3M183 1171v3M200.1 1171v3M217.2 1171v3M234.3 1171v3M251.4 1171v3M268.6 1171v3M285.7 1171v3M302.8 1171v3M319.9 1171v3M337 1171v3M354.1 1171v3M371.2 1171v3M388.3 1171v3M405.5 1171v3M422.6 1171v3M439.7 1171v3M456.8 1171v3M473.9 1171v3M491 1171v3M508.1 1171v3M525.3 1171v3M542.4 1171v3M559.5 1171v3M576.6 1171v3M593.7 1171v3M610.8 1171v3M627.9 1171v3M645 1171v3M662.2 1171v3M679.3 1171v3M696.4 1171v3M713.5 1171v3M730.6 1171v3M747.7 1171v3M764.8 1171v3M781.9 1171v3M799.1 1171v3M816.2 1171v3M833.3 1171v3M850.4 1171v3M867.5 1171v3M884.6 1171v3M901.7 1171v3M918.9 1171v3M936 1171v3M953.1 1171v3M970.2 1171v3M987.3 1171v3M1004.4 1171v3M1021.5 1171v3M1038.6 1171v3M1055.8 1171v3M1072.9 1171v3M1090 1171v3M1107.1 1171v3M1124.2 1171v3M1141.3 1171v3M1158.4 1171v3M1175.5 1171v3M1192.7 1171v3M1209.8 1171v3M1226.9 1171v3M1244 1171v3M1261.1 1171v3M1278.2 1171v3M1295.3 1171v3M1312.4 1171v3M1329.6 1171v3M1346.7 1171v3M1363.8 1171v3M1380.9 1171v3M1398 1171v3M1415.1 1171v3M1432.2 1171v3M1449.4 1171v3M1466.5 1171v3M1483.6 1171v3M1500.7 1171v3M1517.8 1171v3M1534.9 1171v3M1552 1171v3M1569.1 1171v3M1586.3 1171v3M1603.4 1171v3" stroke="#777" stroke-width="1" opacity="0.5"/><rect x="50" y="1150.5" width="9.5" height="14" fill="#12d86a"/><text x="60.5" y="1160.5" fill="#12d86a">0</text><text x="88.4" y="1160.5" text-anchor="middle">2</text><text x="122.7" y="1160.5" text-anchor="middle">4</text><text x="156.9" y="1160.5" text-anchor="middle">6</text><text x="191.1" y="1160.5" text-anchor="middle">8</text><text x="225.3" y="1160.5" text-anchor="middle">10</text><text x="259.6" y="1160.5" text-anchor="middle">12</text><text x="293.8" y="1160.5" text-anchor="middle">14</text><text x="328" y="1160.5" text-anchor="middle">16</text><text x="362.2" y="1160.5" text-anchor="middle">18</text><text x="396.5" y="1160.5" text-anchor="middle">20</text><text x="430.7" y="1160.5" text-anchor="middle">22</text><text x="464.9" y="1160.5" text-anchor="middle">24</text><text x="499.1" y="1160.5" text-anchor="middle">26</text><text x="533.4" y="1160.5" text-anchor="middle">28</text><text x="567.6" y="1160.5" text-anchor="middle">30</text><text x="601.8" y="1160.5" text-anchor="middle">32</text><text x="636" y="1160.5" text-anchor="middle">34</text><text x="670.3" y="1160.5" text-anchor="middle">36</text><text x="704.5" y="1160.5" text-anchor="middle">38</text><text x="738.7" y="1160.5" text-anchor="middle">40</text><text x="772.9" y="1160.5" text-anchor="middle">42</text><text x="807.2" y="1160.5" text-anchor="middle">44</text><text x="841.4" y="1160.5" text-anchor="middle">46</text><text x="875.6" y="1160.5" text-anchor="middle">48</text><text x="909.9" y="1160.5" text-anchor="middle">50</text><text x="944.1" y="1160.5" text-anchor="middle">52</text><text x="978.3" y="1160.5" text-anchor="middle">54</text><text x="1012.5" y="1160.5" text-anchor="middle">56</text><text x="1046.8" y="1160.5" text-anchor="middle">58</text><text x="1081" y="1160.5" text-anchor="middle">60</text><text x="1115.2" y="1160.5" text-anchor="middle">62</text><text x="1149.4" y="1160.5" text-anchor="middle">64</text><text x="1183.7" y="1160.5" text-anchor="middle">66</text><text x="1217.9" y="1160.5" text-anchor="middle">68</text><text x="1252.1" y="1160.5" text-anchor="middle">70</text><text x="1286.3" y="1160.5" text-anchor="middle">72</text><text x="1320.6" y="1160.5" text-anchor="middle">74</text><text x="1354.8" y="1160.5" text-anchor="middle">76</text><text x="1389" y="1160.5" text-anchor="middle">78</text><text x="1423.2" y="1160.5" text-anchor="middle">80</text><text x="1457.5" y="1160.5" text-anchor="middle">82</text><text x="1491.7" y="1160.5" text-anchor="middle">84</text><text x="1525.9" y="1160.5" text-anchor="middle">86</text><text x="1560.1" y="1160.5" text-anchor="middle">88</text><text x="1594.4" y="1160.5" text-anchor="middle">90</text><path d="M570.5 1162v8M1081.5 1162v8M1594.8 1150v24" stroke="#aaa" stroke-width="1"/></svg><div class="abs" style="left:1607px;top:1152px;width:81px;height:16.5px;background:#2c2c2c;box-shadow:inset 0 1px 1px #1c1c1c,0 1px 0 #4a4a4a;color:#d2d2d2;font-size:12px;line-height:17.5px;padding-left:6px;white-space:nowrap">0 F<svg class="abs" style="right:2px;top:3.25px" width="6" height="10" viewBox="0 0 6 10"><path d="M3 0.5l2.5 3.5h-5zM3 9.5l2.5-3.5h-5z" fill="#8a8a8a"/></svg></div><div class="abs" style="left:48px;top:1182px;width:80px;height:16px;background:#2c2c2c;box-shadow:inset 0 1px 1px #1c1c1c,0 1px 0 #4a4a4a;color:#d2d2d2;font-size:12px;line-height:17px;padding-left:5px;white-space:nowrap">0 F<svg class="abs" style="right:2px;top:3px" width="6" height="10" viewBox="0 0 6 10"><path d="M3 0.5l2.5 3.5h-5zM3 9.5l2.5-3.5h-5z" fill="#8a8a8a"/></svg></div><div class="abs" style="left:137px;top:1182.5px;width:956px;height:16.5px;border-radius:4px;background:linear-gradient(#7e7e7e,#666 45%,#555);box-shadow:0 0 0 1px #2c2c2c,inset 0 1px 0 #8c8c8c"></div><div class="abs" style="left:141px;top:1183px;font-size:11.5px;color:#2a2a2a;line-height:16px;white-space:nowrap"><span style="color:#ddd;font-size:8px;vertical-align:1px">&#9664;</span> 0 F</div><div class="abs" style="left:1030px;top:1183px;width:60px;text-align:right;font-size:11.5px;color:#2a2a2a;line-height:16px;white-space:nowrap">90 F <span style="color:#ddd;font-size:8px;vertical-align:1px">&#9654;</span></div><div class="abs" style="left:1099px;top:1182px;width:80px;height:16px;background:#2c2c2c;box-shadow:inset 0 1px 1px #1c1c1c,0 1px 0 #4a4a4a;color:#d2d2d2;font-size:12px;line-height:17px;padding-left:5px;white-space:nowrap">90 F<svg class="abs" style="right:2px;top:3px" width="6" height="10" viewBox="0 0 6 10"><path d="M3 0.5l2.5 3.5h-5zM3 9.5l2.5-3.5h-5z" fill="#8a8a8a"/></svg></div><div class="abs" style="left:1192.6px;top:1177px;width:26px;height:26px;background:#5e5e5e;box-shadow:0 0 0 1px #353535"></div><div class="abs" style="left:1231px;top:1177px;width:138.3px;height:26px;background:#5e5e5e;box-shadow:0 0 0 1px #353535"></div><div class="abs" style="left:1258.66px;top:1177px;width:1px;height:26px;background:#505050"></div><div class="abs" style="left:1286.32px;top:1177px;width:1px;height:26px;background:#505050"></div><div class="abs" style="left:1313.98px;top:1177px;width:1px;height:26px;background:#505050"></div><div class="abs" style="left:1341.64px;top:1177px;width:1px;height:26px;background:#505050"></div><div class="abs" style="left:1380.7px;top:1177px;width:26.3px;height:26px;background:#5e5e5e;box-shadow:0 0 0 1px #353535"></div><div class="abs" style="left:1419px;top:1177px;width:82px;height:26px;background:#5e5e5e;box-shadow:0 0 0 1px #353535"></div><div class="abs" style="left:1446.33px;top:1177px;width:1px;height:26px;background:#505050"></div><div class="abs" style="left:1473.67px;top:1177px;width:1px;height:26px;background:#505050"></div><div class="abs" style="left:1513px;top:1177px;width:138px;height:26px;background:#5e5e5e;box-shadow:0 0 0 1px #353535"></div><div class="abs" style="left:1513px;top:1177px;width:110.4px;height:26px;background:#7ba0d8"></div><div class="abs" style="left:1540.6px;top:1177px;width:1px;height:26px;background:#5f7fb0"></div><div class="abs" style="left:1568.2px;top:1177px;width:1px;height:26px;background:#5f7fb0"></div><div class="abs" style="left:1595.8px;top:1177px;width:1px;height:26px;background:#5f7fb0"></div><div class="abs" style="left:1623.4px;top:1177px;width:1px;height:26px;background:#5f7fb0"></div><div class="abs" style="left:1663px;top:1177px;width:26px;height:26px;background:#5e5e5e;box-shadow:0 0 0 1px #353535"></div><div class="abs" style="left:1663px;top:1177px;width:26px;height:26px;background:#7ba0d8"></div><svg class="abs" style="left:1190px;top:1176px" width="502" height="28" viewBox="1190 1176 502 28"><path d="M1198 1183v14" stroke="#1a1a1a" stroke-width="2.4"/><path d="M1199.5 1190l7-6.5l-2 6.5l2 6.5zM1205.5 1190l7-6.5l-2 6.5l2 6.5z" fill="#1a1a1a"/><path d="M1252.5 1186a7 7 0 1 0 0 8" fill="none" stroke="#1a1a1a" stroke-width="4.2"/><path d="M1246.5 1183l8-1.5l-1 8z" fill="#1a1a1a"/><path d="M1265.5 1190l9-4.5l-2.5 4.5l2.5 4.5z" fill="#1a1a1a"/><path d="M1279.5 1183.5q-4 6.5 0 13" fill="none" stroke="#1a1a1a" stroke-width="1.8"/><path d="M1292 1181l16 9l-16 9l4-9z" fill="#1fd860" stroke="#0a3a18" stroke-width="1.2" stroke-linejoin="round"/><path d="M1335 1190l-9-4.5l2.5 4.5l-2.5 4.5z" fill="#1a1a1a"/><path d="M1321 1183.5q4 6.5 0 13" fill="none" stroke="#1a1a1a" stroke-width="1.8"/><path d="M1348 1186a7 7 0 1 1 0 8" fill="none" stroke="#1a1a1a" stroke-width="4.2"/><path d="M1354 1183l-8-1.5l1 8z" fill="#1a1a1a"/><path d="M1402 1183v14" stroke="#1a1a1a" stroke-width="2.4"/><path d="M1400.5 1190l-7-6.5l2 6.5l-2 6.5zM1394.5 1190l-7-6.5l2 6.5l-2 6.5z" fill="#1a1a1a"/><circle cx="1432.7" cy="1190" r="10" fill="#ee3f4a" stroke="#3a1010" stroke-width="1.4"/><path d="M1429.2 1195l7-8.5" stroke="#1a1a1a" stroke-width="2.2"/><circle cx="1429.2" cy="1195" r="2.6" fill="#1a1a1a"/><path d="M1435.2 1185.5l2.5 2.5" stroke="#1a1a1a" stroke-width="2"/><circle cx="1460" cy="1190" r="10" fill="#ee3f4a" stroke="#3a1010" stroke-width="1.4"/><path d="M1457.5 1184q-4.5 6 0 12M1462.5 1184q4.5 6 0 12" fill="none" stroke="#1a1a1a" stroke-width="2.4"/><circle cx="1487.3" cy="1190" r="10" fill="#ee3f4a" stroke="#3a1010" stroke-width="1.4"/><text x="1487.3" y="1196" font-family="Liberation Sans" font-weight="bold" font-size="16" text-anchor="middle" fill="#1a1a1a">?</text><path d="M1526.8 1180l3.5 4.5h-2.2v3.8h3.8v-2.2l4.5 3.5l-4.5 3.5v-2.2h-3.8v3.8h2.2l-3.5 4.5l-3.5-4.5h2.2v-3.8h-3.8v2.2l-4.5-3.5l4.5-3.5v2.2h3.8v-3.8h-2.2z" fill="#f6921c" stroke="#3a2a10" stroke-width="0.9" stroke-linejoin="round"/><rect x="1546.9" y="1182.5" width="15" height="15" fill="#f6921c" stroke="#3a2a10" stroke-width="1.1"/><path d="M1546.9 1190h7.5v7.5M1554.4 1190l6-6" fill="none" stroke="#3a2a10" stroke-width="1"/><path d="M1575 1194a7.5 7.5 0 0 1 9-10.5M1589 1186a7.5 7.5 0 0 1-9 10.5" fill="none" stroke="#3a2a10" stroke-width="4"/><path d="M1575 1194a7.5 7.5 0 0 1 9-10.5M1589 1186a7.5 7.5 0 0 1-9 10.5" fill="none" stroke="#f6921c" stroke-width="2.3"/><circle cx="1609.6" cy="1190" r="11" fill="none" stroke="#6a5a4a" stroke-width="1.2"/><circle cx="1609.6" cy="1190" r="8.8" fill="none" stroke="#8a6a4a" stroke-width="1.4"/><text x="1609.9" y="1196" font-family="Liberation Sans" font-weight="bold" font-size="15" text-anchor="middle" fill="#0a1020">P</text><circle cx="1628.7" cy="1183" r="2.6" fill="#f0902a" stroke="#2a1a0a" stroke-width="0.6"/><circle cx="1636.7" cy="1183" r="2.6" fill="#f0902a" stroke="#2a1a0a" stroke-width="0.6"/><circle cx="1644.7" cy="1183" r="2.6" fill="#111" stroke="#2a1a0a" stroke-width="0.6"/><circle cx="1628.7" cy="1190" r="2.6" fill="#f0902a" stroke="#2a1a0a" stroke-width="0.6"/><circle cx="1636.7" cy="1190" r="2.6" fill="#f0902a" stroke="#2a1a0a" stroke-width="0.6"/><circle cx="1644.7" cy="1190" r="2.6" fill="#111" stroke="#2a1a0a" stroke-width="0.6"/><circle cx="1628.7" cy="1197" r="2.6" fill="#111" stroke="#2a1a0a" stroke-width="0.6"/><circle cx="1636.7" cy="1197" r="2.6" fill="#111" stroke="#2a1a0a" stroke-width="0.6"/><circle cx="1644.7" cy="1197" r="2.6" fill="#111" stroke="#2a1a0a" stroke-width="0.6"/><rect x="1669" y="1178.5" width="13" height="23" fill="#e8913a" stroke="#1a1a1a" stroke-width="1"/><path d="M1670 1178.5v23M1681 1178.5v23" stroke="#1a1a1a" stroke-width="2.4" stroke-dasharray="1.5 1.5"/><path d="M1669 1186h13M1669 1194h13" stroke="#1a1a1a" stroke-width="1.2"/><path d="M1688.5 1202.5h-5l5-5z" fill="#12283c"/></svg>
<div class="abs" style="left:39px;top:1207px;width:1287px;height:161px;border:1px solid #4a4a4a;border-right-color:#353535;background:#3d3d3d"></div><div class="abs" style="left:40px;top:1229px;width:1285px;height:1px;background:#4e4e4e"></div><div class="grip" style="left:45px;top:1213px"></div><div class="pm" style="left:0;top:1208px;width:400px;height:21px"><span style="left:66px">Create</span><span style="left:115px">Edit</span><span style="left:150px">Function</span><span style="left:210px">Texture</span></div><svg class="abs" style="left:42px;top:1233px" width="43" height="58" viewBox="0 0 43 58"><defs><radialGradient id="sph" cx="0.38" cy="0.32" r="0.75"><stop offset="0" stop-color="#ffffff"/><stop offset="0.45" stop-color="#f0f0f0"/><stop offset="0.8" stop-color="#b8b8b8"/><stop offset="1" stop-color="#7a7a7a"/></radialGradient><pattern id="strp" width="12" height="12" patternUnits="userSpaceOnUse" patternTransform="rotate(-45)"><rect width="12" height="12" fill="#7e7e7e"/><rect width="6" height="12" fill="#9a9a9a"/></pattern></defs><rect width="43" height="43" fill="url(#strp)"/><circle cx="20" cy="20" r="17.8" fill="url(#sph)"/><rect y="43" width="43" height="15" fill="#6b6b6b"/><text x="0.5" y="55" font-family="Liberation Sans" font-size="11.5" fill="#f0f0f0">Cyc Mat</text></svg><div class="abs" style="left:0;top:1270px;width:40px;height:98px;overflow:hidden"><div style="position:absolute;left:1.5px;top:92.5px;transform-origin:0 0;transform:rotate(-90deg);white-space:nowrap;line-height:17px"><div style="font-size:16.5px;font-weight:bold;font-style:italic;letter-spacing:-1px;color:#9c9c9c;-webkit-text-stroke:0.5px #9c9c9c">MAXON</div><div style="font-size:15.5px;letter-spacing:-0.1px;margin-top:2px;color:#7e7e7e">CINEMA 4D</div></div></div><div class="abs" style="left:0;top:1369px;width:1690px;height:1px;background:#4c4c4c"></div><div class="abs" style="left:0;top:1370px;width:2560px;height:20px;background:#3e3e3e"></div><div class="grip" style="left:4px;top:1375px;width:13px;height:13px"></div>
<div class="abs" style="left:1327px;top:1207px;width:363px;height:161px;border:1px solid #4a4a4a;background:#3d3d3d"></div><div class="abs" style="left:1328px;top:1229px;width:361px;height:1px;background:#4e4e4e"></div><div class="grip" style="left:1333px;top:1213px"></div><div class="pm" style="left:0;top:1208px;width:1700px;height:21px"><span style="left:1352px">Position</span><span style="left:1465px">Size</span><span style="left:1578px">Rotation</span></div><div class="abs" style="left:1332px;top:1235.5px;font-size:11.5px;color:#c8c8c8;line-height:17px">X</div><div class="abs" style="left:1343.5px;top:1235.5px;width:104px;height:16px;background:#2c2c2c;box-shadow:inset 0 1px 1px #1c1c1c,0 1px 0 #4a4a4a;color:#d2d2d2;font-size:11.5px;line-height:17px;padding-left:5px;white-space:nowrap">-490.173 mm<svg class="abs" style="right:2px;top:3px" width="6" height="10" viewBox="0 0 6 10"><path d="M3 0.5l2.5 3.5h-5zM3 9.5l2.5-3.5h-5z" fill="#8a8a8a"/></svg></div><div class="abs" style="left:1451px;top:1235.5px;font-size:11.5px;color:#c8c8c8;line-height:17px">X</div><div class="abs" style="left:1463px;top:1235.5px;width:104px;height:16px;background:#2c2c2c;box-shadow:inset 0 1px 1px #1c1c1c,0 1px 0 #4a4a4a;color:#d2d2d2;font-size:11.5px;line-height:17px;padding-left:5px;white-space:nowrap">1000 mm<svg class="abs" style="right:2px;top:3px" width="6" height="10" viewBox="0 0 6 10"><path d="M3 0.5l2.5 3.5h-5zM3 9.5l2.5-3.5h-5z" fill="#8a8a8a"/></svg></div><div class="abs" style="left:1570px;top:1235.5px;font-size:11.5px;color:#c8c8c8;line-height:17px">H</div><div class="abs" style="left:1583px;top:1235.5px;width:102px;height:16px;background:#2c2c2c;box-shadow:inset 0 1px 1px #1c1c1c,0 1px 0 #4a4a4a;color:#d2d2d2;font-size:11.5px;line-height:17px;padding-left:5px;white-space:nowrap">0 &deg;<svg class="abs" style="right:2px;top:3px" width="6" height="10" viewBox="0 0 6 10"><path d="M3 0.5l2.5 3.5h-5zM3 9.5l2.5-3.5h-5z" fill="#8a8a8a"/></svg></div><div class="abs" style="left:1332px;top:1256.5px;font-size:11.5px;color:#c8c8c8;line-height:17px">Y</div><div class="abs" style="left:1343.5px;top:1256.5px;width:104px;height:16px;background:#2c2c2c;box-shadow:inset 0 1px 1px #1c1c1c,0 1px 0 #4a4a4a;color:#d2d2d2;font-size:11.5px;line-height:17px;padding-left:5px;white-space:nowrap">-1051.122 mm<svg class="abs" style="right:2px;top:3px" width="6" height="10" viewBox="0 0 6 10"><path d="M3 0.5l2.5 3.5h-5zM3 9.5l2.5-3.5h-5z" fill="#8a8a8a"/></svg></div><div class="abs" style="left:1451px;top:1256.5px;font-size:11.5px;color:#c8c8c8;line-height:17px">Y</div><div class="abs" style="left:1463px;top:1256.5px;width:104px;height:16px;background:#2c2c2c;box-shadow:inset 0 1px 1px #1c1c1c,0 1px 0 #4a4a4a;color:#d2d2d2;font-size:11.5px;line-height:17px;padding-left:5px;white-space:nowrap">1000 mm<svg class="abs" style="right:2px;top:3px" width="6" height="10" viewBox="0 0 6 10"><path d="M3 0.5l2.5 3.5h-5zM3 9.5l2.5-3.5h-5z" fill="#8a8a8a"/></svg></div><div class="abs" style="left:1570px;top:1256.5px;font-size:11.5px;color:#c8c8c8;line-height:17px">P</div><div class="abs" style="left:1583px;top:1256.5px;width:102px;height:16px;background:#2c2c2c;box-shadow:inset 0 1px 1px #1c1c1c,0 1px 0 #4a4a4a;color:#d2d2d2;font-size:11.5px;line-height:17px;padding-left:5px;white-space:nowrap">0 &deg;<svg class="abs" style="right:2px;top:3px" width="6" height="10" viewBox="0 0 6 10"><path d="M3 0.5l2.5 3.5h-5zM3 9.5l2.5-3.5h-5z" fill="#8a8a8a"/></svg></div><div class="abs" style="left:1332px;top:1277.5px;font-size:11.5px;color:#c8c8c8;line-height:17px">Z</div><div class="abs" style="left:1343.5px;top:1277.5px;width:104px;height:16px;background:#2c2c2c;box-shadow:inset 0 1px 1px #1c1c1c,0 1px 0 #4a4a4a;color:#d2d2d2;font-size:11.5px;line-height:17px;padding-left:5px;white-space:nowrap">0 mm<svg class="abs" style="right:2px;top:3px" width="6" height="10" viewBox="0 0 6 10"><path d="M3 0.5l2.5 3.5h-5zM3 9.5l2.5-3.5h-5z" fill="#8a8a8a"/></svg></div><div class="abs" style="left:1451px;top:1277.5px;font-size:11.5px;color:#c8c8c8;line-height:17px">Z</div><div class="abs" style="left:1463px;top:1277.5px;width:104px;height:16px;background:#2c2c2c;box-shadow:inset 0 1px 1px #1c1c1c,0 1px 0 #4a4a4a;color:#d2d2d2;font-size:11.5px;line-height:17px;padding-left:5px;white-space:nowrap">1000 mm<svg class="abs" style="right:2px;top:3px" width="6" height="10" viewBox="0 0 6 10"><path d="M3 0.5l2.5 3.5h-5zM3 9.5l2.5-3.5h-5z" fill="#8a8a8a"/></svg></div><div class="abs" style="left:1570px;top:1277.5px;font-size:11.5px;color:#c8c8c8;line-height:17px">B</div><div class="abs" style="left:1583px;top:1277.5px;width:102px;height:16px;background:#2c2c2c;box-shadow:inset 0 1px 1px #1c1c1c,0 1px 0 #4a4a4a;color:#d2d2d2;font-size:11.5px;line-height:17px;padding-left:5px;white-space:nowrap">0 &deg;<svg class="abs" style="right:2px;top:3px" width="6" height="10" viewBox="0 0 6 10"><path d="M3 0.5l2.5 3.5h-5zM3 9.5l2.5-3.5h-5z" fill="#8a8a8a"/></svg></div><div class="abs" style="left:1343.5px;top:1301px;width:104px;height:13.5px;border-radius:3px;background:linear-gradient(#6e6e6e,#585858);box-shadow:0 1px 1px #252525;color:#e2e2e2;font-size:11.5px;line-height:13.5px;padding-left:7px;white-space:nowrap">Object (Rel)<div class="abs" style="right:6px;top:4.75px;border:4px solid transparent;border-top:4px solid #ddd;border-bottom:0"></div></div><div class="abs" style="left:1463px;top:1301px;width:104px;height:13.5px;border-radius:3px;background:linear-gradient(#6e6e6e,#585858);box-shadow:0 1px 1px #252525;color:#e2e2e2;font-size:11.5px;line-height:13.5px;padding-left:7px;white-space:nowrap">Size<div class="abs" style="right:6px;top:4.75px;border:4px solid transparent;border-top:4px solid #ddd;border-bottom:0"></div></div><div class="abs" style="left:1583px;top:1301px;width:102px;height:14px;border-radius:7px;background:linear-gradient(#6a6a6a,#555);box-shadow:0 1px 1px #252525;color:#e2e2e2;font-size:11.5px;line-height:15px;text-align:center">Apply</div><div class="abs" id="wm" style="left:1078px;top:1316px;font-size:33px;color:#e4e4e4;letter-spacing:6.5px;-webkit-text-stroke:0.7px #e4e4e4;white-space:nowrap;line-height:40px;transform-origin:0 0;transform:scaleX(0.85);font-weight:normal">STEBRADBURYDESIGN</div>
<div class="abs" style="left:1692px;top:68px;width:845px;height:640px;border:1px solid #4c4c4c;background:#404040"></div><div class="abs" style="left:1693px;top:69px;width:843px;height:24px;background:#3d3d3d;border-bottom:1px solid #555"></div><div class="grip" style="left:1698px;top:75px;width:13px;height:12px"></div><div class="pm" style="left:0;top:70px;width:2560px;height:22px"><span style="left:1719.5px">File</span><span style="left:1753px">Edit</span><span style="left:1788px">View</span><span style="left:1827.5px">Objects</span><span style="left:1883px">Tags</span><span style="left:1921.5px">Bookmarks</span></div><svg class="abs" style="left:2460px;top:70px" width="78" height="22" viewBox="2460 70 78 22" fill="none" stroke="#1c1c1c" stroke-width="1.6"><circle cx="2470" cy="78" r="3.5"/><path d="M2472.5 81l4 5.5" stroke-width="2.2"/><path d="M2485 81.5l6-6.5l6 6.5h-3v5.5h-6v-5.5z" stroke-width="1.7"/><ellipse cx="2510" cy="81.5" rx="5.5" ry="2.2" stroke="#2d2d2d" stroke-width="1.4"/><rect x="2523" y="75" width="11" height="12" stroke-width="1.5"/><path d="M2523 77h11" stroke-width="2.4"/><path d="M2528.5 79.5v6M2525.5 82.5h6" stroke-width="1.4"/></svg><div class="abs" style="left:1693px;top:94px;width:843px;height:20px;background:#484848"></div><div class="abs" style="left:1693px;top:114px;width:843px;height:20px;background:#424242"></div><div class="abs" style="left:1693px;top:134px;width:843px;height:20px;background:#484848"></div><div class="abs" style="left:1693px;top:154px;width:843px;height:20px;background:#424242"></div><div class="abs" style="left:1810px;top:94px;width:1px;height:613px;background:#2f2f2f"></div><div class="abs" style="left:1811px;top:94px;width:1px;height:613px;background:#4a4a4a"></div><div class="abs" style="left:1850px;top:94px;width:1px;height:613px;background:#2f2f2f"></div><div class="abs" style="left:1851px;top:94px;width:1px;height:613px;background:#4a4a4a"></div><svg class="abs" style="left:1693px;top:94px" width="250" height="82" viewBox="1693 94 250 82"><path d="M1702.5 94v6M1702.5 109v56.5h8.5M1702.5 145h8M1707 104.5h4M1713.5 111v14h7" fill="none" stroke="#9a9a9a" stroke-width="1"/><rect x="1698.5" y="100.5" width="8" height="8" fill="#404040" stroke="#aaa" stroke-width="1"/><path d="M1700.5 104.5h4" stroke="#ddd" stroke-width="1"/><path d="M1712.5 110v-6l3-2.5l2.5-3l2.5 3l3.5 2.5v6z" fill="#4fb0f0" stroke="#1a4a7a" stroke-width="0.7"/><path d="M1713 105l2.5-2l2.5-3v10M1721 102v8" fill="none" stroke="#d8f0ff" stroke-width="1.2"/><path d="M1712.5 106h12" stroke="#bfe4ff" stroke-width="0.8"/><path d="M1723.5 118.5q-3.5 5 0 10" fill="none" stroke="#c8c8d8" stroke-width="1.2"/><path d="M1725.5 122.5L1729.2 128.8L1737 123" fill="none" stroke="#2a3290" stroke-width="4.4" stroke-linejoin="round"/><path d="M1725.5 122.5L1729.2 128.8L1737 123" fill="none" stroke="#5868e0" stroke-width="3" stroke-linejoin="round"/><path d="M1726.5 122L1729.7 127.3L1736 122.6" fill="none" stroke="#9aa6f4" stroke-width="0.9"/><path d="M1711.5 150.5L1715 148.5L1719.5 138L1722 142L1724.5 138" fill="none" stroke="#111" stroke-width="2.8"/><path d="M1711.5 150.5L1715 148.5L1719.5 138L1722 142L1724.5 138" fill="none" stroke="#7ac0f0" stroke-width="1.2"/><g fill="#fff"><circle cx="1715" cy="148.5" r="1.2"/><circle cx="1719.5" cy="138.2" r="1.2"/></g><path d="M1710.5 151.5l2.5-2M1722.5 137l3 2" stroke="#111" stroke-width="1.8"/><path d="M1718.5 158l-6 11.5h12z" fill="#4fb0f0" stroke="#0f3a66" stroke-width="1.1"/><g fill="#fff"><circle cx="1718.5" cy="157.5" r="1.7"/><circle cx="1712.5" cy="169.5" r="1.7"/><circle cx="1724.5" cy="169.5" r="1.7"/></g><path d="M1714 172.5h9" stroke="#a0522a" stroke-width="0.8" stroke-dasharray="2 1.5"/><rect x="1814" y="98.8" width="12" height="11.5" fill="#7a7a7a"/><path d="M1814.5 109.8l11-10.5" stroke="#404040" stroke-width="1.3"/><circle cx="1833.5" cy="100.2" r="1.8" fill="#6c6c6c"/><circle cx="1833.5" cy="108.3" r="1.8" fill="#6c6c6c"/><path d="M1838.5 106l3 3.5l5.5-9" fill="none" stroke="#22c47a" stroke-width="1.9"/><rect x="1814" y="118.8" width="12" height="11.5" fill="#7a7a7a"/><path d="M1814.5 129.8l11-10.5" stroke="#404040" stroke-width="1.3"/><circle cx="1833.5" cy="120.2" r="1.8" fill="#6c6c6c"/><circle cx="1833.5" cy="128.3" r="1.8" fill="#6c6c6c"/><path d="M1838.5 126l3 3.5l5.5-9" fill="none" stroke="#22c47a" stroke-width="1.9"/><rect x="1814" y="138.8" width="12" height="11.5" fill="#7a7a7a"/><path d="M1814.5 149.8l11-10.5" stroke="#404040" stroke-width="1.3"/><circle cx="1833.5" cy="140.2" r="1.8" fill="#6c6c6c"/><circle cx="1833.5" cy="148.3" r="1.8" fill="#6c6c6c"/><path d="M1838.5 146l3 3.5l5.5-9" fill="none" stroke="#22c47a" stroke-width="1.9"/><rect x="1814" y="158.8" width="12" height="11.5" fill="#7a7a7a"/><path d="M1814.5 169.8l11-10.5" stroke="#404040" stroke-width="1.3"/><circle cx="1833.5" cy="160.2" r="1.8" fill="#6c6c6c"/><circle cx="1833.5" cy="168.3" r="1.8" fill="#6c6c6c"/><path d="M1856.5 98.5l6.5 8" stroke="#7a4a1a" stroke-width="1.2"/><circle cx="1856.5" cy="98.5" r="3.3" fill="#e8872a"/><circle cx="1863" cy="106.5" r="3.3" fill="#e8872a"/><circle cx="1855.7" cy="97.7" r="1.3" fill="#f8c080"/><circle cx="1862.2" cy="105.7" r="1.3" fill="#f8c080"/><path d="M1896 158.5l6.5 8" stroke="#7a4a1a" stroke-width="1.2"/><circle cx="1896" cy="158.5" r="3.3" fill="#e8872a"/><circle cx="1902.5" cy="166.5" r="3.3" fill="#e8872a"/><circle cx="1895.2" cy="157.7" r="1.3" fill="#f8c080"/><circle cx="1901.7" cy="165.7" r="1.3" fill="#f8c080"/><rect x="1854.5" y="163.5" width="11.5" height="7" fill="#e87a2a" stroke="#3a1e08" stroke-width="0.8"/><path d="M1858.5 165.2l3.5 1.8l-3.5 1.8z" fill="#2a1408"/><path d="M1854.5 162.5h11.5" stroke="#111" stroke-width="1.8"/><path d="M1856 162v-3.5q1.5-2 3 0M1859.5 162v-3.5q1.5-2 3 0M1863 162v-3.5q1.5-2 3 0" fill="none" stroke="#111" stroke-width="1"/><defs><radialGradient id="sph2" cx="0.4" cy="0.35" r="0.7"><stop offset="0" stop-color="#fff"/><stop offset="0.6" stop-color="#ddd"/><stop offset="1" stop-color="#8a8a8a"/></radialGradient></defs><rect x="1871" y="155.5" width="18" height="18" fill="#8c8c8c"/><path d="M1871 173.5l18-18" stroke="#a8a8a8" stroke-width="4"/><circle cx="1879.5" cy="164" r="7.8" fill="url(#sph2)"/><rect x="1913.5" y="157.5" width="13" height="13" fill="#fff" stroke="#c87a3a" stroke-width="1"/><path d="M1913.5 157.5h4.3v4.3h-4.3zM1922.2 157.5h4.3v4.3h-4.3zM1917.8 161.8h4.4v4.4h-4.4zM1913.5 166.2h4.3v4.3h-4.3zM1922.2 166.2h4.3v4.3h-4.3z" fill="#111"/></svg><div class="pm" style="left:0;top:94px;width:2000px;height:80px"><span style="left:1730px;top:3.5px;color:#c47a2c">Landscape</span><span style="left:1741px;top:23.5px;color:#f7c13a;font-weight:bold;font-size:11px">Spline Wrap</span><span style="left:1730px;top:43.5px">&amp; 3</span><span style="left:1730px;top:63.5px">Studio C</span></div><svg class="abs" style="left:1700px;top:535px" width="55" height="90" viewBox="0 0 55 90"><path d="M37 3l-29 84" stroke="#555" stroke-width="7" stroke-dasharray="5 4" opacity="0.45"/></svg>
<div class="abs" style="left:1692px;top:713px;width:845px;height:677px;border:1px solid #4c4c4c;border-bottom:0;background:#404040"></div><div class="abs" style="left:1693px;top:714px;width:843px;height:21px;background:#555;border-bottom:1px solid #4a4a4a"></div><div class="grip" style="left:1698px;top:719px;width:13px;height:12px"></div><div class="pm" style="left:0;top:714px;width:2560px;height:22px"><span style="left:1719.5px">Mode</span><span style="left:1763.5px">Edit</span><span style="left:1798.5px">User Data</span></div><svg class="abs" style="left:2380px;top:714px" width="158" height="22" viewBox="2380 714 158 22" fill="none" stroke="#1c1c1c" stroke-width="1.6"><path d="M2388 724.5l15-6l-3.5 6l3.5 6z" fill="#1c1c1c" stroke="none"/><path d="M2410 724.5l15-6l-3.5 6l3.5 6z" fill="#505050" stroke="none" transform="translate(4835 0) scale(-1 1)"/><path d="M2440 717l7 15l-7-3.5l-7 3.5z" fill="#1c1c1c" stroke="none"/><circle cx="2465" cy="721.5" r="3.5"/><path d="M2467.5 724.5l4 5.5" stroke-width="2.2"/><rect x="2487" y="724" width="9.5" height="8"/><path d="M2489 724v-3a3 3 0 0 1 6 0" /><path d="M2491.7 726.5v3" stroke-width="1.2"/><circle cx="2509" cy="725" r="6"/><circle cx="2509" cy="725" r="3"/><circle cx="2509" cy="725" r="0.8" fill="#1c1c1c"/><rect x="2523" y="719" width="11" height="12" stroke-width="1.5"/><path d="M2523 721h11" stroke-width="2.4"/><path d="M2528.5 723.5v6M2525.5 726.5h6" stroke-width="1.4"/></svg><svg class="abs" style="left:1696px;top:740px" width="22" height="20" viewBox="1696 740 22 20"><path d="M1701 741.5q-5 6 0 12" fill="none" stroke="#c8c8d8" stroke-width="1.3"/><path d="M1701.5 747L1706.5 756.5L1716.5 748.5" fill="none" stroke="#2a3290" stroke-width="5.4" stroke-linejoin="round"/><path d="M1701.5 747L1706.5 756.5L1716.5 748.5" fill="none" stroke="#5868e0" stroke-width="3.8" stroke-linejoin="round"/><path d="M1702.8 746.5L1707 754.5L1715.5 748" fill="none" stroke="#9aa6f4" stroke-width="1"/></svg><div class="pm" style="left:1722px;top:740px;width:300px;height:20px"><span style="left:0;top:4px;color:#d4d4d4">Spline Wrap [Spline Wrap]</span></div><div class="abs" style="left:1697px;top:764.5px;width:42.5px;height:16.5px;background:linear-gradient(#6e6e6e,#5a5a5a);color:#e0e0e0;font-size:11.5px;line-height:16.5px;text-align:center;box-shadow:0 0 0 0.5px #333">Basic</div><div class="abs" style="left:1740px;top:764.5px;width:43.5px;height:16.5px;background:linear-gradient(#6e6e6e,#5a5a5a);color:#e0e0e0;font-size:11.5px;line-height:16.5px;text-align:center;box-shadow:0 0 0 0.5px #333">Coord.</div><div class="abs" style="left:1784.5px;top:764.5px;width:43.5px;height:16.5px;background:linear-gradient(#8db3ea,#6f97d6);color:#101828;font-size:11.5px;line-height:16.5px;text-align:center;box-shadow:0 0 0 0.5px #333">Object</div><div class="abs" style="left:1696px;top:788px;width:824px;height:16px;background:#353535;color:#dcdcdc;font-size:11.5px;font-weight:bold;line-height:16.5px;padding-left:2px">Object Properties</div><svg class="abs" style="left:1697.3px;top:810px" width="15" height="15" viewBox="0 0 15 15"><circle cx="7.5" cy="7.5" r="6" fill="#3a3a3a" stroke="#8e8e8e" stroke-width="1.2"/><circle cx="7.5" cy="7.5" r="3.2" fill="#8e8e8e"/></svg><div class="abs" style="left:1716px;top:809px;font-size:11.5px;color:#d0d0d0;line-height:16px;white-space:nowrap;">Spline<span style="color:#777;letter-spacing:2.3px"> ..</span></div><svg class="abs" style="left:1697.3px;top:830.8px" width="15" height="15" viewBox="0 0 15 15"><circle cx="7.5" cy="7.5" r="6" fill="#3a3a3a" stroke="#8e8e8e" stroke-width="1.2"/><circle cx="7.5" cy="7.5" r="3.2" fill="#8e8e8e"/></svg><div class="abs" style="left:1716px;top:829.8px;font-size:11.5px;color:#d0d0d0;line-height:16px;white-space:nowrap;">Rail<span style="color:#777;letter-spacing:2.3px"> ....</span></div><svg class="abs" style="left:1697.3px;top:850.7px" width="15" height="15" viewBox="0 0 15 15"><circle cx="7.5" cy="7.5" r="6" fill="#3a3a3a" stroke="#8e8e8e" stroke-width="1.2"/><circle cx="7.5" cy="7.5" r="3.2" fill="#8e8e8e"/></svg><div class="abs" style="left:1716px;top:849.7px;font-size:11.5px;color:#d0d0d0;line-height:16px;white-space:nowrap;">Axis<span style="color:#777;letter-spacing:2.3px"> ...</span></div><svg class="abs" style="left:1697.3px;top:871px" width="15" height="15" viewBox="0 0 15 15"><circle cx="7.5" cy="7.5" r="6" fill="#3a3a3a" stroke="#8e8e8e" stroke-width="1.2"/><circle cx="7.5" cy="7.5" r="3.2" fill="#8e8e8e"/></svg><div class="abs" style="left:1716px;top:870px;font-size:11.5px;color:#d0d0d0;line-height:16px;white-space:nowrap;">Strength</div><svg class="abs" style="left:1697.3px;top:891.9px" width="15" height="15" viewBox="0 0 15 15"><circle cx="7.5" cy="7.5" r="6" fill="#3a3a3a" stroke="#8e8e8e" stroke-width="1.2"/><circle cx="7.5" cy="7.5" r="3.2" fill="#8e8e8e"/></svg><div class="abs" style="left:1716px;top:890.9px;font-size:11.5px;color:#d0d0d0;line-height:16px;white-space:nowrap;">Offset<span style="color:#777;letter-spacing:2.3px"> ..</span></div><svg class="abs" style="left:1697.3px;top:912.8px" width="15" height="15" viewBox="0 0 15 15"><circle cx="7.5" cy="7.5" r="6" fill="#3a3a3a" stroke="#8e8e8e" stroke-width="1.2"/><circle cx="7.5" cy="7.5" r="3.2" fill="#8e8e8e"/></svg><div class="abs" style="left:1716px;top:911.8px;font-size:11.5px;color:#d0d0d0;line-height:16px;white-space:nowrap;">From<span style="color:#777;letter-spacing:2.3px"> ...</span></div><svg class="abs" style="left:1697.3px;top:933.8px" width="15" height="15" viewBox="0 0 15 15"><circle cx="7.5" cy="7.5" r="6" fill="#3a3a3a" stroke="#8e8e8e" stroke-width="1.2"/><circle cx="7.5" cy="7.5" r="3.2" fill="#8e8e8e"/></svg><div class="abs" style="left:1716px;top:932.8px;font-size:11.5px;color:#d0d0d0;line-height:16px;white-space:nowrap;">To<span style="color:#777;letter-spacing:2.3px"> .....</span></div><div class="abs" style="left:1766.5px;top:808.5px;width:722px;height:16px;background:#2c2c2c;box-shadow:inset 0 1px 1px #1a1a1a,0 1px 0 #4a4a4a"></div><div class="abs" style="left:2489.5px;top:808.5px;width:9px;height:16px;background:#555;border-radius:0 2px 2px 0"><div class="abs" style="left:3px;top:4.5px;border:3px solid transparent;border-left:4px solid #ccc;border-right:0"></div></div><svg class="abs" style="left:2500.5px;top:808px" width="18" height="18" viewBox="0 0 18 18"><circle cx="9" cy="9" r="7.8" fill="#d8d8d8" stroke="#222" stroke-width="1"/><path d="M5 4.5l8.5 4.5l-3.5 1l2.2 3.5l-1.6 1l-2.2-3.6l-2.4 2.6z" fill="#111"/></svg><div class="abs" style="left:1766.5px;top:829.3px;width:722px;height:16px;background:#2c2c2c;box-shadow:inset 0 1px 1px #1a1a1a,0 1px 0 #4a4a4a"></div><div class="abs" style="left:2489.5px;top:829.3px;width:9px;height:16px;background:#555;border-radius:0 2px 2px 0"><div class="abs" style="left:3px;top:4.5px;border:3px solid transparent;border-left:4px solid #ccc;border-right:0"></div></div><svg class="abs" style="left:2500.5px;top:828.8px" width="18" height="18" viewBox="0 0 18 18"><circle cx="9" cy="9" r="7.8" fill="#d8d8d8" stroke="#222" stroke-width="1"/><path d="M5 4.5l8.5 4.5l-3.5 1l2.2 3.5l-1.6 1l-2.2-3.6l-2.4 2.6z" fill="#111"/></svg><div class="abs" style="left:1766.5px;top:851px;width:752px;height:14.5px;background:#303030;box-shadow:inset 0 1px 1px #1a1a1a,0 1px 0 #4a4a4a;color:#d8d8d8;font-size:11.5px;line-height:14px;padding-left:7px">+Y<div class="abs" style="right:6px;top:5px;border:4px solid transparent;border-top:4px solid #ccc;border-bottom:0"></div></div><div class="abs" style="left:1766.5px;top:871.25px;width:82px;height:14.5px;background:#2c2c2c;box-shadow:inset 0 1px 1px #1a1a1a,0 1px 0 #4a4a4a;color:#d8d8d8;font-size:11.5px;line-height:15px;padding-left:5px;white-space:nowrap">100 %<svg class="abs" style="right:2px;top:2.75px" width="5" height="9" viewBox="0 0 5 9"><path d="M2.5 0.5l2 3h-4zM2.5 8.5l2-3h-4z" fill="#8a8a8a"/></svg></div><div class="abs" style="left:1850px;top:871.75px;width:668px;height:13.5px;background:#7c7c7c;box-shadow:inset 0 1px 1px #8e8e8e,0 1px 0 #4a4a4a"></div><div class="abs" style="left:2515.5px;top:871.75px;width:2.5px;height:13.5px;background:#f0a020"></div><div class="abs" style="left:1766.5px;top:892.15px;width:82px;height:14.5px;background:#2c2c2c;box-shadow:inset 0 1px 1px #1a1a1a,0 1px 0 #4a4a4a;color:#d8d8d8;font-size:11.5px;line-height:15px;padding-left:5px;white-space:nowrap">0 %<svg class="abs" style="right:2px;top:2.75px" width="5" height="9" viewBox="0 0 5 9"><path d="M2.5 0.5l2 3h-4zM2.5 8.5l2-3h-4z" fill="#8a8a8a"/></svg></div><div class="abs" style="left:1850px;top:892.65px;width:668px;height:13.5px;background:#2c2c2c;box-shadow:inset 0 1px 1px #1a1a1a,0 1px 0 #4a4a4a"></div><div class="abs" style="left:1850px;top:892.65px;width:2.5px;height:13.5px;background:#f0a020"></div><div class="abs" style="left:1766.5px;top:913.05px;width:82px;height:14.5px;background:#2c2c2c;box-shadow:inset 0 1px 1px #1a1a1a,0 1px 0 #4a4a4a;color:#d8d8d8;font-size:11.5px;line-height:15px;padding-left:5px;white-space:nowrap">0 %<svg class="abs" style="right:2px;top:2.75px" width="5" height="9" viewBox="0 0 5 9"><path d="M2.5 0.5l2 3h-4zM2.5 8.5l2-3h-4z" fill="#8a8a8a"/></svg></div><div class="abs" style="left:1850px;top:913.55px;width:668px;height:13.5px;background:#2c2c2c;box-shadow:inset 0 1px 1px #1a1a1a,0 1px 0 #4a4a4a"></div><div class="abs" style="left:1850px;top:913.55px;width:2.5px;height:13.5px;background:#f0a020"></div><div class="abs" style="left:1766.5px;top:934.05px;width:82px;height:14.5px;background:#2c2c2c;box-shadow:inset 0 1px 1px #1a1a1a,0 1px 0 #4a4a4a;color:#d8d8d8;font-size:11.5px;line-height:15px;padding-left:5px;white-space:nowrap">100 %<svg class="abs" style="right:2px;top:2.75px" width="5" height="9" viewBox="0 0 5 9"><path d="M2.5 0.5l2 3h-4zM2.5 8.5l2-3h-4z" fill="#8a8a8a"/></svg></div><div class="abs" style="left:1850px;top:934.55px;width:668px;height:13.5px;background:#7c7c7c;box-shadow:inset 0 1px 1px #8e8e8e,0 1px 0 #4a4a4a"></div><div class="abs" style="left:2515.5px;top:934.55px;width:2.5px;height:13.5px;background:#f0a020"></div><div class="abs" style="left:1696px;top:955.5px;width:824px;height:1px;background:#2e2e2e"></div><div class="abs" style="left:1696px;top:956.5px;width:824px;height:1px;background:#4a4a4a"></div><svg class="abs" style="left:1697.3px;top:960.5px" width="15" height="15" viewBox="0 0 15 15"><circle cx="7.5" cy="7.5" r="6" fill="#3a3a3a" stroke="#8e8e8e" stroke-width="1.2"/><circle cx="7.5" cy="7.5" r="3.2" fill="#8e8e8e"/></svg><div class="abs" style="left:1716px;top:959.5px;font-size:11.5px;color:#d0d0d0;line-height:16px;white-space:nowrap;">Mode</div><div class="abs" style="left:1751px;top:961px;width:97px;height:14px;border-radius:3px;background:linear-gradient(#6e6e6e,#585858);box-shadow:0 1px 1px #252525;color:#e2e2e2;font-size:11.5px;line-height:14px;padding-left:7px;white-space:nowrap">Fit Spline<div class="abs" style="right:6px;top:5px;border:4px solid transparent;border-top:4px solid #ddd;border-bottom:0"></div></div><svg class="abs" style="left:1852.8px;top:960.5px" width="15" height="15" viewBox="0 0 15 15"><circle cx="7.5" cy="7.5" r="6" fill="#3a3a3a" stroke="#8e8e8e" stroke-width="1.2"/><circle cx="7.5" cy="7.5" r="3.2" fill="#8e8e8e"/></svg><div class="abs" style="left:1871px;top:959.5px;font-size:11.5px;color:#d0d0d0;line-height:16px;white-space:nowrap;">End Mode</div><div class="abs" style="left:1929px;top:961px;width:67px;height:14px;border-radius:3px;background:linear-gradient(#6e6e6e,#585858);box-shadow:0 1px 1px #252525;color:#e2e2e2;font-size:11.5px;line-height:14px;padding-left:7px;white-space:nowrap">Extend<div class="abs" style="right:6px;top:5px;border:4px solid transparent;border-top:4px solid #ddd;border-bottom:0"></div></div><div class="abs" style="left:1696px;top:981px;width:824px;height:15px;background:#565656;color:#dcdcdc;font-size:11.5px;line-height:15.5px;padding-left:20px">Size<div class="abs" style="left:11px;top:5.5px;border:3.5px solid transparent;border-top:4.5px solid #ddd;border-bottom:0"></div></div><div class="abs" style="left:1724px;top:999.5px;font-size:11.5px;color:#d0d0d0;line-height:16px;white-space:nowrap;"><span style="color:#6e6e6e">Scale from Rail</span><span style="color:#5e5e5e;letter-spacing:2.3px"> .....</span></div><div class="abs" style="left:1836.5px;top:1002.5px;width:10px;height:10px;background:#4c4c4c;border-radius:1px"></div><svg class="abs" style="left:1709px;top:1001px" width="10" height="14" viewBox="0 0 10 14"><path d="M7 1.5q1.5 5-3.5 10" fill="none" stroke="#505050" stroke-width="1.2"/></svg><svg class="abs" style="left:1705.1px;top:1019.5px" width="15" height="15" viewBox="0 0 15 15"><circle cx="7.5" cy="7.5" r="6" fill="#3a3a3a" stroke="#8e8e8e" stroke-width="1.2"/><circle cx="7.5" cy="7.5" r="3.2" fill="#8e8e8e"/></svg><div class="abs" style="left:1724px;top:1018.5px;font-size:11.5px;color:#d0d0d0;line-height:16px;white-space:nowrap;">Size<span style="color:#777;letter-spacing:2.3px"> ...........</span></div><div class="abs" style="left:1826.5px;top:1021.5px;border:3px solid transparent;border-left:4px solid #151515;border-right:0"></div><svg class="abs" style="left:1836.5px;top:1018.5px" width="675.5" height="159" viewBox="1836.5 1018.5 675.5 159" font-family="Liberation Sans" font-size="11" fill="#6e6e6e"><rect x="1836.5" y="1018.5" width="675.5" height="159" fill="#3a3a3a"/><rect x="1868.4" y="1018.5" width="609.8" height="143.1" fill="#494949"/><path d="M1868.4 1018.5V1161.6M1898.9 1018.5V1161.6M1929.4 1018.5V1161.6M1959.9 1018.5V1161.6M1990.4 1018.5V1161.6M2020.8 1018.5V1161.6M2051.3 1018.5V1161.6M2081.8 1018.5V1161.6M2112.3 1018.5V1161.6M2142.8 1018.5V1161.6M2173.3 1018.5V1161.6M2203.8 1018.5V1161.6M2234.3 1018.5V1161.6M2264.8 1018.5V1161.6M2295.3 1018.5V1161.6M2325.8 1018.5V1161.6M2356.2 1018.5V1161.6M2386.7 1018.5V1161.6M2417.2 1018.5V1161.6M2447.7 1018.5V1161.6M2478.2 1018.5V1161.6M1868.4 1034.3H2478.2M1868.4 1059.8H2478.2M1868.4 1085.2H2478.2M1868.4 1110.7H2478.2M1868.4 1136.1H2478.2M1868.4 1161.6H2478.2" stroke="#343434" stroke-width="1" fill="none"/><path d="M1868.4 1018.5V1165.6" stroke="#1e1e1e" stroke-width="1.2"/><text x="1864.4" y="1063.8" text-anchor="end">0&#46;8</text><text x="1864.4" y="1114.7" text-anchor="end">0&#46;4</text><text x="1864.4" y="1160.6" text-anchor="end" fill="#5a5a5a">- -</text><text x="1868.4" y="1173.1" text-anchor="middle">0&#46;0</text><text x="1929.4" y="1173.1" text-anchor="middle">0&#46;1</text><text x="1990.4" y="1173.1" text-anchor="middle">0&#46;2</text><text x="2051.3" y="1173.1" text-anchor="middle">0&#46;3</text><text x="2112.3" y="1173.1" text-anchor="middle">0&#46;4</text><text x="2173.3" y="1173.1" text-anchor="middle">0&#46;5</text><text x="2234.3" y="1173.1" text-anchor="middle">0&#46;6</text><text x="2295.3" y="1173.1" text-anchor="middle">0&#46;7</text><text x="2356.2" y="1173.1" text-anchor="middle">0&#46;8</text><text x="2417.2" y="1173.1" text-anchor="middle">0&#46;9</text><text x="2478.2" y="1173.1" text-anchor="middle">1&#46;0</text><path d="M1836.5 1034.3H2512" stroke="#d8d8d8" stroke-width="1.1" stroke-dasharray="1.3 2.2"/><path d="M1868.4 1034.3H2478.2" stroke="#9fc4e4" stroke-width="1.2"/><rect x="1866.4" y="1032.3" width="4" height="4" fill="#8fc0ea"/><rect x="2476.2" y="1032.3" width="4" height="4" fill="#8fc0ea"/></svg><svg class="abs" style="left:1705.1px;top:1182px" width="15" height="15" viewBox="0 0 15 15"><circle cx="7.5" cy="7.5" r="6" fill="#3a3a3a" stroke="#8e8e8e" stroke-width="1.2"/><circle cx="7.5" cy="7.5" r="3.2" fill="#8e8e8e"/></svg><div class="abs" style="left:1724px;top:1181px;font-size:11.5px;color:#d0d0d0;line-height:16px;white-space:nowrap;">Size Strength<span style="color:#777;letter-spacing:2.3px"> ......</span></div><div class="abs" style="left:1836.5px;top:1182.25px;width:81px;height:14.5px;background:#2c2c2c;box-shadow:inset 0 1px 1px #1a1a1a,0 1px 0 #4a4a4a;color:#d8d8d8;font-size:11.5px;line-height:15px;padding-left:5px;white-space:nowrap">100 %<svg class="abs" style="right:2px;top:2.75px" width="5" height="9" viewBox="0 0 5 9"><path d="M2.5 0.5l2 3h-4zM2.5 8.5l2-3h-4z" fill="#8a8a8a"/></svg></div><div class="abs" style="left:1919px;top:1182.75px;width:591px;height:13.5px;background:#7c7c7c;box-shadow:inset 0 1px 1px #8e8e8e,0 1px 0 #4a4a4a"></div><div class="abs" style="left:2507.5px;top:1182.75px;width:2.5px;height:13.5px;background:#f0a020"></div><div class="abs" style="left:1704px;top:1203px;width:808px;height:1px;background:#2e2e2e"></div><div class="abs" style="left:1704px;top:1204px;width:808px;height:1px;background:#4a4a4a"></div><svg class="abs" style="left:1705.1px;top:1208.6px" width="15" height="15" viewBox="0 0 15 15"><circle cx="7.5" cy="7.5" r="6" fill="#3a3a3a" stroke="#8e8e8e" stroke-width="1.2"/><circle cx="7.5" cy="7.5" r="3.2" fill="#8e8e8e"/></svg><div class="abs" style="left:1724px;top:1207.6px;font-size:11.5px;color:#d0d0d0;line-height:16px;white-space:nowrap;">Spline Size<span style="color:#777;letter-spacing:2.3px"> .....</span></div><div class="abs" style="left:1826.5px;top:1210.6px;border:3px solid transparent;border-left:4px solid #151515;border-right:0"></div><svg class="abs" style="left:1836.5px;top:1207.6px" width="675.5" height="159" viewBox="1836.5 1207.6 675.5 159" font-family="Liberation Sans" font-size="11" fill="#6e6e6e"><rect x="1836.5" y="1207.6" width="675.5" height="159" fill="#3a3a3a"/><rect x="1868.4" y="1207.6" width="609.8" height="143.1" fill="#494949"/><path d="M1868.4 1207.6V1350.7M1898.9 1207.6V1350.7M1929.4 1207.6V1350.7M1959.9 1207.6V1350.7M1990.4 1207.6V1350.7M2020.8 1207.6V1350.7M2051.3 1207.6V1350.7M2081.8 1207.6V1350.7M2112.3 1207.6V1350.7M2142.8 1207.6V1350.7M2173.3 1207.6V1350.7M2203.8 1207.6V1350.7M2234.3 1207.6V1350.7M2264.8 1207.6V1350.7M2295.3 1207.6V1350.7M2325.8 1207.6V1350.7M2356.2 1207.6V1350.7M2386.7 1207.6V1350.7M2417.2 1207.6V1350.7M2447.7 1207.6V1350.7M2478.2 1207.6V1350.7M1868.4 1223.4H2478.2M1868.4 1248.9H2478.2M1868.4 1274.3H2478.2M1868.4 1299.8H2478.2M1868.4 1325.2H2478.2M1868.4 1350.7H2478.2" stroke="#343434" stroke-width="1" fill="none"/><path d="M1868.4 1207.6V1354.7" stroke="#1e1e1e" stroke-width="1.2"/><text x="1864.4" y="1252.9" text-anchor="end">0&#46;8</text><text x="1864.4" y="1303.8" text-anchor="end">0&#46;4</text><text x="1864.4" y="1349.7" text-anchor="end" fill="#5a5a5a">- -</text><text x="1868.4" y="1362.2" text-anchor="middle">0&#46;0</text><text x="1929.4" y="1362.2" text-anchor="middle">0&#46;1</text><text x="1990.4" y="1362.2" text-anchor="middle">0&#46;2</text><text x="2051.3" y="1362.2" text-anchor="middle">0&#46;3</text><text x="2112.3" y="1362.2" text-anchor="middle">0&#46;4</text><text x="2173.3" y="1362.2" text-anchor="middle">0&#46;5</text><text x="2234.3" y="1362.2" text-anchor="middle">0&#46;6</text><text x="2295.3" y="1362.2" text-anchor="middle">0&#46;7</text><text x="2356.2" y="1362.2" text-anchor="middle">0&#46;8</text><text x="2417.2" y="1362.2" text-anchor="middle">0&#46;9</text><text x="2478.2" y="1362.2" text-anchor="middle">1&#46;0</text><path d="M1836.5 1223.4H2512" stroke="#d8d8d8" stroke-width="1.1" stroke-dasharray="1.3 2.2"/><path d="M1868.4 1223.4H2478.2" stroke="#9fc4e4" stroke-width="1.2"/><rect x="1866.4" y="1221.4" width="4" height="4" fill="#8fc0ea"/><rect x="2476.2" y="1221.4" width="4" height="4" fill="#8fc0ea"/></svg><svg class="abs" style="left:1705.1px;top:1371.3px" width="15" height="15" viewBox="0 0 15 15"><circle cx="7.5" cy="7.5" r="6" fill="#3a3a3a" stroke="#8e8e8e" stroke-width="1.2"/><circle cx="7.5" cy="7.5" r="3.2" fill="#8e8e8e"/></svg><div class="abs" style="left:1724px;top:1370.3px;font-size:11.5px;color:#d0d0d0;line-height:16px;white-space:nowrap;">Spline Size Strength</div><div class="abs" style="left:1836.5px;top:1371.55px;width:81px;height:14.5px;background:#2c2c2c;box-shadow:inset 0 1px 1px #1a1a1a,0 1px 0 #4a4a4a;color:#d8d8d8;font-size:11.5px;line-height:15px;padding-left:5px;white-space:nowrap">100 %<svg class="abs" style="right:2px;top:2.75px" width="5" height="9" viewBox="0 0 5 9"><path d="M2.5 0.5l2 3h-4zM2.5 8.5l2-3h-4z" fill="#8a8a8a"/></svg></div><div class="abs" style="left:1919px;top:1372.05px;width:591px;height:13.5px;background:#7c7c7c;box-shadow:inset 0 1px 1px #8e8e8e,0 1px 0 #4a4a4a"></div><div class="abs" style="left:2507.5px;top:1372.05px;width:2.5px;height:13.5px;background:#f0a020"></div><div class="abs" style="left:2522px;top:786px;width:10px;height:600px;background:#333"></div><div class="abs" style="left:2522.5px;top:793px;width:9px;height:325px;background:#5a5a5a;border-radius:4px"></div><div class="abs" style="left:2524px;top:787px;border:3.5px solid transparent;border-bottom:5px solid #777;border-top:0"></div><div class="abs" style="left:2524px;top:1377px;border:3.5px solid transparent;border-top:5px solid #777;border-bottom:0"></div>
<div class="abs" style="left:2538px;top:68px;width:22px;height:1322px;background:#3b3b3b"></div><div class="abs" style="left:2540px;top:69px;width:20px;height:52px;background:#5c5c5c;border-radius:3px 0 0 3px;overflow:hidden"><div style="position:absolute;left:18.5px;top:0px;width:52px;height:18px;transform-origin:0 0;transform:rotate(90deg);color:#f5a623;font-size:11.5px;line-height:18px;text-align:center;white-space:nowrap;font-weight:bold;">Objects</div></div><div class="abs" style="left:2540px;top:122px;width:20px;height:45px;background:#333;border-radius:3px 0 0 3px;overflow:hidden"><div style="position:absolute;left:18.5px;top:0px;width:45px;height:18px;transform-origin:0 0;transform:rotate(90deg);color:#6e6e6e;font-size:11.5px;line-height:18px;text-align:center;white-space:nowrap;">Takes</div></div><div class="abs" style="left:2540px;top:168px;width:20px;height:94px;background:#333;border-radius:3px 0 0 3px;overflow:hidden"><div style="position:absolute;left:18.5px;top:0px;width:94px;height:18px;transform-origin:0 0;transform:rotate(90deg);color:#6e6e6e;font-size:11.5px;line-height:18px;text-align:center;white-space:nowrap;">Content Browser</div></div><div class="abs" style="left:2540px;top:263px;width:20px;height:59px;background:#333;border-radius:3px 0 0 3px;overflow:hidden"><div style="position:absolute;left:18.5px;top:0px;width:59px;height:18px;transform-origin:0 0;transform:rotate(90deg);color:#6e6e6e;font-size:11.5px;line-height:18px;text-align:center;white-space:nowrap;">Structure</div></div><div class="abs" style="left:2540px;top:714px;width:20px;height:61px;background:#5c5c5c;border-radius:3px 0 0 3px;overflow:hidden"><div style="position:absolute;left:18.5px;top:0px;width:61px;height:18px;transform-origin:0 0;transform:rotate(90deg);color:#f5a623;font-size:11.5px;line-height:18px;text-align:center;white-space:nowrap;font-weight:bold;">Attributes</div></div><div class="abs" style="left:2540px;top:776px;width:20px;height:50px;background:#333;border-radius:3px 0 0 3px;overflow:hidden"><div style="position:absolute;left:18.5px;top:0px;width:50px;height:18px;transform-origin:0 0;transform:rotate(90deg);color:#6e6e6e;font-size:11.5px;line-height:18px;text-align:center;white-space:nowrap;">Layers</div></div>
<div class="abs" style="left:0;top:1390px;width:2560px;height:50px;background:linear-gradient(#050505,#121212)"></div><div class="abs" style="left:755px;top:1390px;width:1050px;height:50px;background:#232323"></div><svg class="abs" style="left:748px;top:1390px" width="1060" height="50" viewBox="748 1390 1060 50" font-family="Liberation Sans"><defs><linearGradient id="gfold" x1="0" y1="0" x2="0" y2="1"><stop offset="0" stop-color="#8fd0f8"/><stop offset="1" stop-color="#58a8e8"/></linearGradient><radialGradient id="gc4d" cx="0.35" cy="0.4" r="0.7"><stop offset="0" stop-color="#3a4a9a"/><stop offset="0.6" stop-color="#10163a"/><stop offset="1" stop-color="#05060f"/></radialGradient><linearGradient id="gitunes" x1="0" y1="0" x2="1" y2="1"><stop offset="0" stop-color="#f05ad0"/><stop offset="0.5" stop-color="#b060f0"/><stop offset="1" stop-color="#40a0f8"/></linearGradient><linearGradient id="gapp" x1="0" y1="0" x2="0" y2="1"><stop offset="0" stop-color="#2ec0f8"/><stop offset="1" stop-color="#1a78e8"/></linearGradient><linearGradient id="ggreen" x1="0" y1="0" x2="0" y2="1"><stop offset="0" stop-color="#4fe08a"/><stop offset="1" stop-color="#0f9a48"/></linearGradient></defs><rect x="762.5" y="1398" width="32.5" height="30.5" rx="3" fill="#eef1f5"/><path d="M765.5 1398h17q-4 8-4.5 17h4q0 8 1.5 13.5h-18a3 3 0 0 1-3-3v-24.5a3 3 0 0 1 3-3z" fill="#1e96f4"/><path d="M771 1405.5v3.5M786.5 1405.5v3.5" stroke="#16283a" stroke-width="1.7"/><path d="M768 1417.5q10.5 8 21.5 0" fill="none" stroke="#16283a" stroke-width="1.4"/><g transform="rotate(-9 820 1414)"><rect x="805.5" y="1399" width="28" height="31" fill="#eef2f6" stroke="#c8ccd0" stroke-width="0.6"/><rect x="808" y="1401.5" width="23" height="26" fill="#5a9ae0"/><path d="M808 1419l23-5v13.5h-23z" fill="#9cc4ea"/><path d="M812 1410c4 2 6 6 8 10l6 4l-3-7c-2-5-6-8-11-7z" fill="#f0f0e8"/><path d="M818 1417l8 7" stroke="#8a6a30" stroke-width="2.5"/></g><rect x="822.5" y="1396" width="17.5" height="12" rx="6" fill="#f0403a"/><text x="831.3" y="1405" font-size="8" fill="#fff" text-anchor="middle">359</text><circle cx="860.5" cy="1413.2" r="17.8" fill="#f2c218"/><path d="M845.1 1404.3A17.8 17.8 0 0 1 875.9 1404.3L860.5 1413.2Z" fill="#e0402c"/><path d="M845.1 1404.3A17.8 17.8 0 0 0 863.3 1430.8L860.5 1413.2Z" fill="#2ea84a"/><circle cx="860.5" cy="1413.2" r="8.2" fill="#f4f4f4"/><circle cx="860.5" cy="1413.2" r="6.5" fill="#3a7ae8"/><rect x="884" y="1395.8" width="35" height="33.5" fill="#0a2a3a" stroke="#8ad0e8" stroke-width="1.5"/><text x="901.5" y="1420.5" font-size="22.5" text-anchor="middle" textLength="19" lengthAdjust="spacingAndGlyphs" fill="#a8e0f8">Lr</text><rect x="925" y="1395.8" width="35" height="33.5" fill="#0a2a40" stroke="#28c8f0" stroke-width="1.5"/><text x="942.5" y="1420.5" font-size="22.5" text-anchor="middle" textLength="22" lengthAdjust="spacingAndGlyphs" fill="#30d0f8">Ps</text><rect x="966" y="1395.8" width="35" height="33.5" fill="#3a1a04" stroke="#f08a1c" stroke-width="1.5"/><text x="983.5" y="1420.5" font-size="22.5" text-anchor="middle" textLength="18" lengthAdjust="spacingAndGlyphs" fill="#f8921c">Ai</text><rect x="1007" y="1395.8" width="35" height="33.5" fill="#3a041c" stroke="#f0407a" stroke-width="1.5"/><text x="1024.5" y="1420.5" font-size="22.5" text-anchor="middle" textLength="15" lengthAdjust="spacingAndGlyphs" fill="#f84888">Id</text><rect x="1048" y="1395.8" width="35" height="33.5" fill="#28083c" stroke="#b070f0" stroke-width="1.5"/><text x="1065.5" y="1420.5" font-size="22.5" text-anchor="middle" textLength="23" lengthAdjust="spacingAndGlyphs" fill="#c898f8">Ae</text><rect x="1088.5" y="1395.8" width="35" height="33.5" fill="#04302c" stroke="#28d8a8" stroke-width="1.5"/><text x="1106" y="1420.5" font-size="22.5" text-anchor="middle" textLength="23" lengthAdjust="spacingAndGlyphs" fill="#30e0b0">Au</text><rect x="1130.5" y="1396.5" width="33" height="33" rx="9" fill="url(#ggreen)" stroke="#d8f8e4" stroke-width="1"/><path d="M1158 1404h-13a4 4 0 0 0-4 4v12a4 4 0 0 0 4 4h13v-11h-10" fill="none" stroke="#fff" stroke-width="4.5"/><circle cx="1188.5" cy="1413.2" r="17.5" fill="#d8d8e0"/><circle cx="1188.5" cy="1413.2" r="15.5" fill="url(#gc4d)"/><path d="M1176.5 1409.2a13 13 0 0 1 22-6" fill="none" stroke="#c8d0f0" stroke-width="2.5" opacity="0.8"/><circle cx="1191.5" cy="1417.2" r="6" fill="#1a2460"/><circle cx="1229.5" cy="1413.2" r="17" fill="#1028b8"/><circle cx="1223.5" cy="1405.2" r="4.5" fill="#e8f0ff"/><circle cx="1233.5" cy="1404.2" r="4.5" fill="#e8f0ff"/><rect x="1218.5" y="1410.2" width="17" height="11" fill="#e8f0ff"/><path d="M1235.5 1414.2l7-4v10l-7-3z" fill="#e8f0ff"/><rect x="1221.5" y="1413.2" width="11" height="6" fill="#3a68d8"/><circle cx="1270.3" cy="1413" r="17.5" fill="#f6f6f6"/><path d="M1261.3 1406l14-4l4 12l-7 1l-2-6l-7 2z" fill="#b8d4f8"/><path d="M1262.3 1418h10v-9h8v17h-18z" fill="#2a62d8"/><circle cx="1311.6" cy="1413.2" r="17.5" fill="#f4f4f4"/><rect x="1301.6" y="1402.2" width="20" height="22" rx="3" fill="#2a58c8"/><path d="M1306.6 1413.2l5-5l5 5l-5 5z" fill="#fff"/><circle cx="1311.6" cy="1413.2" r="2" fill="#f08a2a"/><circle cx="1352" cy="1413.2" r="17.5" fill="url(#gitunes)"/><circle cx="1352" cy="1413.2" r="14.5" fill="#fafafa"/><path d="M1349 1420.2v-14l10-2.5v13" fill="none" stroke="#e858c0" stroke-width="2.2"/><ellipse cx="1346.2" cy="1420.7" rx="3.3" ry="2.6" fill="#c060e8"/><ellipse cx="1356.2" cy="1417.7" rx="3.3" ry="2.6" fill="#6a88f0"/><circle cx="1393" cy="1413.2" r="17" fill="#1aa8f0"/><circle cx="1384" cy="1403.2" r="9" fill="#1aa8f0"/><circle cx="1402" cy="1423.2" r="9" fill="#1aa8f0"/><text x="1393" y="1423.7" font-size="30" font-weight="bold" text-anchor="middle" fill="#fff">S</text><ellipse cx="1431" cy="1410.2" rx="17" ry="14" fill="#2a9af0"/><path d="M1422 1419.2l-5 9l10-4z" fill="#2a9af0"/><ellipse cx="1441" cy="1421.2" rx="11" ry="8.5" fill="#f0f4f8"/><path d="M1446 1426.2l4 6l-8-2z" fill="#f0f4f8"/><circle cx="1436.5" cy="1421.2" r="1.7" fill="#5a6a7a"/><circle cx="1441" cy="1421.2" r="1.7" fill="#5a6a7a"/><circle cx="1445.5" cy="1421.2" r="1.7" fill="#5a6a7a"/><g transform="rotate(-6 1475 1413.2)"><rect x="1460.5" y="1396.5" width="29" height="33" fill="#f8f8f4"/><rect x="1460.5" y="1396.5" width="29" height="7" fill="#f8d048"/></g><g transform="rotate(-6 1515.5 1413.2)"><rect x="1500.5" y="1397.5" width="30" height="32" rx="3" fill="#f8f8f8"/><path d="M1503.5 1397.5h24a3 3 0 0 1 3 3v6h-30v-6a3 3 0 0 1 3-3z" fill="#e8483c"/><text x="1515.5" y="1404.5" font-size="7" fill="#fff" text-anchor="middle">AUG</text><text x="1515.5" y="1425" font-size="20" fill="#333" text-anchor="middle">7</text></g><rect x="1540.6" y="1397" width="34.5" height="33" rx="3" fill="#8a8e92"/><circle cx="1557.8" cy="1413.2" r="13" fill="#3a3c40" stroke="#c8ccd0" stroke-width="2"/><circle cx="1557.8" cy="1413.2" r="13" fill="none" stroke="#2a2c30" stroke-width="3" stroke-dasharray="2.5 2"/><circle cx="1557.8" cy="1413.2" r="4" fill="#c8ccd0"/><path d="M1557.8 1413.2v-11M1557.8 1413.2l9 6M1557.8 1413.2l-9 6" stroke="#c8ccd0" stroke-width="2"/><path d="M1581.6 1411.2l14-6l18 4l-12 8z" fill="#2a2a2a"/><path d="M1581.6 1411.2l20 6l12-8v8l-12 8l-20-6z" fill="#161616"/><path d="M1586.6 1421.2l10 3l6-4" fill="none" stroke="#e8c838" stroke-width="2.5"/><path d="M1586.6 1424.2l8 2.5" stroke="#3ac850" stroke-width="2"/><circle cx="1639.8" cy="1413.2" r="17.5" fill="url(#gapp)"/><circle cx="1639.8" cy="1413.2" r="14.8" fill="none" stroke="#e0f0ff" stroke-width="1.2"/><path d="M1630.8 1422.2l9-18l9 18M1627.8 1416.2h24M1630.8 1422.2l3-5" fill="none" stroke="#fff" stroke-width="2.6" stroke-linecap="round"/><path d="M1669.5 1396v34" stroke="#4a4a4a" stroke-width="1"/><path d="M1681.6 1396h14l3 3h17v4h-34z" fill="#d8404a"/><rect x="1680.6" y="1404" width="36" height="26" rx="2" fill="url(#gfold)"/><path d="M1684.6 1399.5h30M1685.6 1402h28" stroke="#f8f0f0" stroke-width="1.5"/><path d="M1723 1396h14l3 3h17v4h-34z" fill="#f0f0f0"/><rect x="1722" y="1404" width="36" height="26" rx="2" fill="url(#gfold)"/><path d="M1770.6 1397h30l-4 34h-22z" fill="#d8dce0"/><ellipse cx="1785.6" cy="1397.5" rx="15" ry="3.5" fill="#f4f4f4" stroke="#b8bcc0" stroke-width="0.8"/><path d="M1778.6 1403l2 26M1785.6 1403v26M1792.6 1403l-2 26" stroke="#a8acb0" stroke-width="1"/><circle cx="778" cy="1435.5" r="1.6" fill="#b8b8b8"/><circle cx="820" cy="1435.5" r="1.6" fill="#b8b8b8"/><circle cx="860" cy="1435.5" r="1.6" fill="#b8b8b8"/><circle cx="942.5" cy="1435.5" r="1.6" fill="#b8b8b8"/><circle cx="983.5" cy="1435.5" r="1.6" fill="#b8b8b8"/><circle cx="1106" cy="1435.5" r="1.6" fill="#b8b8b8"/><circle cx="1188.5" cy="1435.5" r="1.6" fill="#b8b8b8"/><circle cx="1229.5" cy="1435.5" r="1.6" fill="#b8b8b8"/><circle cx="1352" cy="1435.5" r="1.6" fill="#b8b8b8"/><circle cx="1434" cy="1435.5" r="1.6" fill="#b8b8b8"/></svg>
</div></body></html>
